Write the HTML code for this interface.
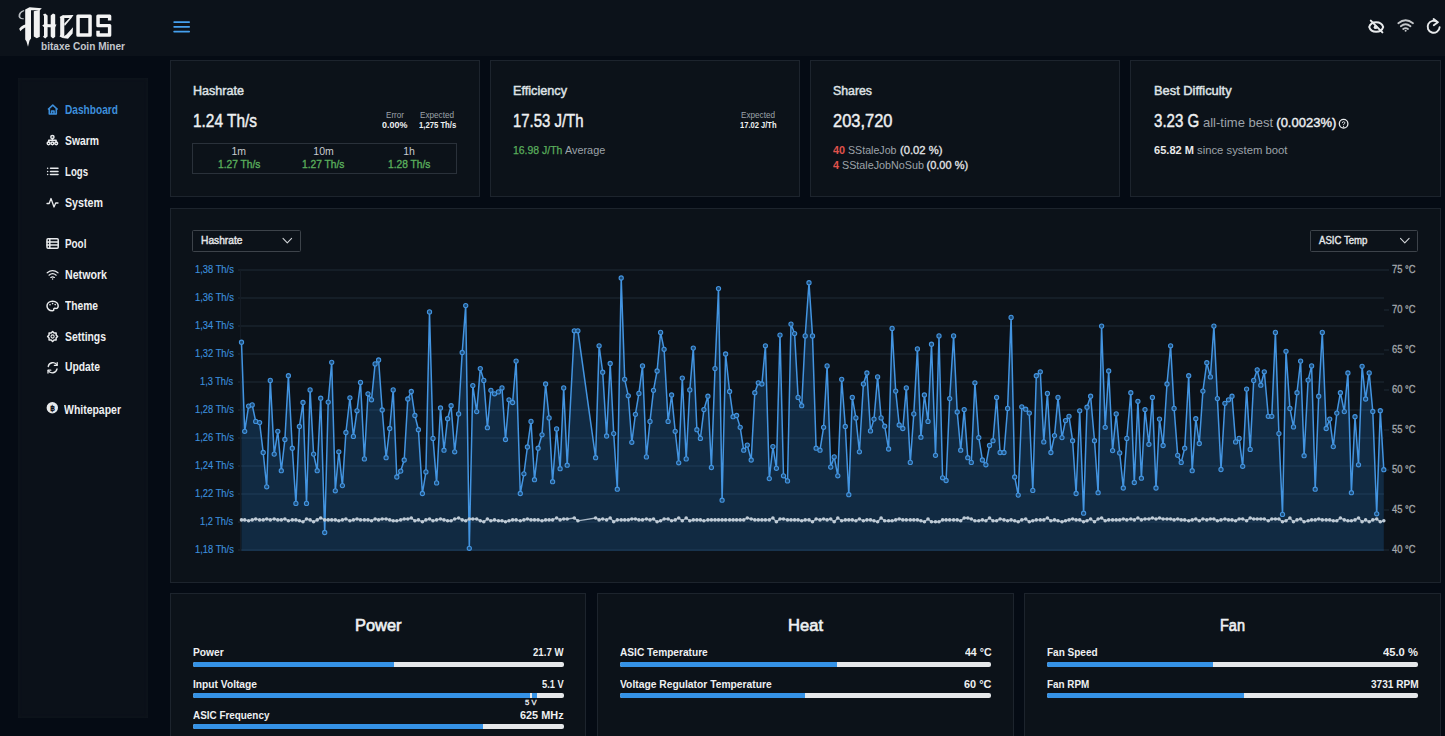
<!DOCTYPE html>
<html><head><meta charset="utf-8"><style>
*{box-sizing:border-box;margin:0;padding:0}
html,body{width:1445px;height:736px;overflow:hidden;background:#050b14;font-family:"Liberation Sans", sans-serif}
.t{position:absolute;white-space:nowrap;line-height:1;transform-origin:0 0}
.a{position:absolute}
.card{position:absolute;background:#0c1219;border:1px solid #1d242d}
.bar{position:absolute;height:5px;background:#e6e8ea;border-radius:2px;overflow:hidden}
.bar div{height:100%;background:#3592e6}
</style></head><body>
<div class="a" style="left:0;top:0;width:1445px;height:56px;background:#0c121a"></div>
<div class="a" style="left:18px;top:78px;width:130px;height:640px;background:#0b1119;box-shadow:0 0 3px 1px #0f151d inset"></div>
<div class="card" style="left:170px;top:60px;width:310px;height:137px"></div>
<div class="card" style="left:490px;top:60px;width:310px;height:137px"></div>
<div class="card" style="left:810px;top:60px;width:310px;height:137px"></div>
<div class="card" style="left:1130px;top:60px;width:311px;height:137px"></div>
<div class="card" style="left:170px;top:208px;width:1271px;height:375px"></div>
<div class="card" style="left:170px;top:593px;width:416px;height:160px"></div>
<div class="card" style="left:597px;top:593px;width:417px;height:160px"></div>
<div class="card" style="left:1024px;top:593px;width:417px;height:160px"></div>
<div class="a" style="left:192px;top:143px;width:265px;height:31px;border:1px solid #2a313a"></div>
<div class="a" style="left:192px;top:230px;width:109px;height:22px;border:1px solid #3d434a;border-radius:1.5px"></div>
<div class="a" style="left:1310px;top:230px;width:108px;height:22px;border:1px solid #3d434a;border-radius:1.5px"></div>
<svg class="a" style="left:0;top:0" width="1445" height="736">
<line x1='238' y1='270' x2='1384' y2='270' stroke='#1f2a36' stroke-width='1'/>
<line x1='238' y1='298' x2='1384' y2='298' stroke='#1f2a36' stroke-width='1'/>
<line x1='238' y1='326' x2='1384' y2='326' stroke='#1f2a36' stroke-width='1'/>
<line x1='238' y1='354' x2='1384' y2='354' stroke='#1f2a36' stroke-width='1'/>
<line x1='238' y1='382' x2='1384' y2='382' stroke='#1f2a36' stroke-width='1'/>
<line x1='238' y1='410' x2='1384' y2='410' stroke='#1f2a36' stroke-width='1'/>
<line x1='238' y1='438' x2='1384' y2='438' stroke='#1f2a36' stroke-width='1'/>
<line x1='238' y1='466' x2='1384' y2='466' stroke='#1f2a36' stroke-width='1'/>
<line x1='238' y1='494' x2='1384' y2='494' stroke='#1f2a36' stroke-width='1'/>
<line x1='238' y1='522' x2='1384' y2='522' stroke='#1f2a36' stroke-width='1'/>
<line x1='238' y1='550' x2='1384' y2='550' stroke='#1f2a36' stroke-width='1'/>
<line x1='1384' y1='270' x2='1389' y2='270' stroke='#1f2a36' stroke-width='1'/>
<line x1='1384' y1='310' x2='1389' y2='310' stroke='#1f2a36' stroke-width='1'/>
<line x1='1384' y1='350' x2='1389' y2='350' stroke='#1f2a36' stroke-width='1'/>
<line x1='1384' y1='390' x2='1389' y2='390' stroke='#1f2a36' stroke-width='1'/>
<line x1='1384' y1='430' x2='1389' y2='430' stroke='#1f2a36' stroke-width='1'/>
<line x1='1384' y1='470' x2='1389' y2='470' stroke='#1f2a36' stroke-width='1'/>
<line x1='1384' y1='510' x2='1389' y2='510' stroke='#1f2a36' stroke-width='1'/>
<line x1='1384' y1='550' x2='1389' y2='550' stroke='#1f2a36' stroke-width='1'/>
<line x1='240.5' y1='270' x2='240.5' y2='551' stroke='#141b24' stroke-width='1'/>
<polygon points='241.5,551 241.5,342.2 244.7,431.3 248.6,406.1 252.2,404.9 255.7,421.4 259.6,422.6 263.2,452.5 266.7,486.8 270.3,380.4 274.2,454.1 277.8,431.3 281.3,470.7 284.9,439.5 288.4,375.7 292.3,448.2 295.9,503.4 299.4,426.5 303.0,402.5 306.5,503.4 310.1,389.9 313.6,454.1 317.2,470.7 320.7,398.2 324.7,532.5 328.2,402.1 331.7,362.3 335.3,490.8 338.8,451.8 342.4,485.6 345.9,432.5 349.9,397.8 353.4,436.4 357.0,410.8 360.5,382.4 364.4,458.9 368.0,393.8 371.5,399.8 375.1,363.9 378.6,360.0 382.2,410.0 386.1,457.7 389.7,428.5 393.2,389.9 396.8,477.0 400.7,471.1 404.2,460.0 407.8,399.0 411.3,391.5 414.9,415.5 418.4,429.7 422.4,493.5 425.9,471.9 429.5,311.9 433.0,438.4 436.6,482.9 440.5,408.0 444.0,450.2 447.6,418.7 451.1,405.7 454.7,451.8 458.6,413.9 462.2,352.5 465.7,305.6 469.3,548.3 472.8,385.6 476.7,411.6 480.3,368.6 483.8,380.4 487.4,427.7 490.9,390.3 494.5,393.8 498.4,391.9 502.0,387.9 505.5,439.5 509.0,399.8 512.6,402.5 516.1,361.1 520.3,493.5 523.9,473.8 527.4,447.0 531.0,421.4 534.5,479.7 538.1,448.2 542.0,434.8 545.6,384.0 549.1,417.9 552.6,481.7 556.6,428.9 560.1,468.7 563.7,387.9 567.2,465.2 574.3,330.8 577.9,330.8 595.6,457.7 599.1,345.8 602.7,372.2 606.6,436.0 610.2,363.5 613.7,433.6 617.3,489.2 621.2,278.0 624.7,379.3 628.3,395.8 631.8,442.3 635.4,414.3 638.9,393.4 642.5,365.9 646.4,456.9 650.0,421.4 653.5,390.3 657.1,371.0 660.6,332.4 664.1,349.3 668.1,421.4 671.6,395.0 675.2,431.3 678.7,462.8 682.3,378.1 686.2,458.9 689.8,389.9 693.3,348.1 696.9,429.7 700.4,438.4 703.9,409.6 707.9,396.2 711.4,467.5 715.0,368.6 718.5,288.6 722.1,500.2 725.6,354.0 729.6,391.5 733.1,416.7 736.6,415.5 740.2,427.3 743.7,450.2 747.3,445.1 751.2,460.0 754.8,392.7 758.3,382.8 761.9,384.0 765.4,345.8 769.3,478.6 772.9,446.6 776.4,468.3 780.0,335.1 783.5,475.8 787.5,480.9 791.0,324.1 794.6,333.6 798.1,397.4 801.7,405.7 805.2,335.9 809.0,282.7 812.5,335.9 816.1,448.2 820.0,450.2 823.6,427.3 827.1,365.9 830.7,467.1 834.2,456.9 837.8,475.8 841.7,379.3 845.3,426.5 848.8,494.7 852.3,397.4 855.9,417.9 859.4,451.8 863.4,384.0 866.9,373.0 870.5,430.9 874.0,419.1 877.6,376.9 881.1,417.9 884.7,426.2 888.6,449.0 892.1,328.4 895.7,391.1 899.2,425.0 902.8,428.5 906.3,387.9 910.3,462.4 913.8,413.9 917.4,348.9 920.9,437.2 924.4,395.0 928.0,421.4 931.5,344.2 935.5,455.3 939.0,335.9 942.6,477.8 946.1,480.5 949.7,398.6 953.6,335.9 957.2,412.0 960.7,450.2 964.2,409.6 967.8,457.7 971.3,462.4 974.9,382.8 978.8,437.6 982.4,460.0 985.9,464.8 989.5,445.5 993.0,440.7 996.6,397.4 1000.1,452.5 1004.0,452.5 1007.6,408.4 1011.1,317.4 1014.7,477.0 1018.2,495.1 1021.8,406.8 1025.7,409.2 1029.3,413.1 1032.8,490.4 1036.3,375.7 1040.3,371.8 1043.8,441.9 1047.4,393.4 1050.9,452.5 1054.5,435.6 1058.0,397.4 1062.0,437.6 1065.5,420.6 1069.0,416.3 1072.6,440.7 1076.1,493.5 1079.7,410.8 1083.6,513.2 1087.0,407.2 1090.6,396.2 1094.5,440.7 1098.1,492.7 1101.6,326.1 1105.2,427.3 1108.7,371.0 1112.6,450.6 1116.2,413.9 1119.7,452.9 1123.3,488.0 1126.8,438.4 1130.8,392.7 1134.3,482.5 1137.9,401.3 1141.4,478.2 1145.0,409.6 1148.9,444.3 1152.4,397.4 1156.0,488.0 1159.5,419.1 1163.1,445.5 1167.0,384.0 1170.6,345.8 1174.1,408.4 1177.7,455.3 1181.2,462.4 1184.7,448.2 1188.7,375.7 1192.2,470.7 1195.8,418.7 1199.3,443.5 1202.9,391.1 1206.8,362.7 1210.4,376.9 1213.9,326.1 1217.4,398.6 1221.0,469.5 1224.9,403.3 1228.5,399.8 1232.0,396.2 1235.6,441.9 1239.1,438.4 1242.7,466.3 1246.6,389.1 1250.2,449.4 1253.7,380.4 1257.2,369.8 1260.8,385.2 1264.3,371.8 1268.3,416.3 1271.8,416.3 1275.4,332.4 1278.9,433.6 1282.5,514.4 1286.0,351.3 1289.9,408.4 1293.5,426.9 1297.0,392.7 1300.6,361.1 1304.1,455.7 1308.1,380.1 1311.6,365.9 1315.2,489.2 1318.7,396.2 1322.3,332.4 1326.2,428.5 1329.7,419.1 1333.3,446.6 1336.8,413.1 1340.4,392.7 1344.3,411.6 1347.9,373.0 1351.4,492.7 1355.0,416.7 1358.5,464.8 1362.1,366.3 1365.6,399.0 1369.2,372.9 1372.8,411.5 1376.7,513.8 1380.3,410.7 1383.8,469.7 1383.8,551' fill='#2882dc' fill-opacity='0.21'/>
<polyline points='241.5,342.2 244.7,431.3 248.6,406.1 252.2,404.9 255.7,421.4 259.6,422.6 263.2,452.5 266.7,486.8 270.3,380.4 274.2,454.1 277.8,431.3 281.3,470.7 284.9,439.5 288.4,375.7 292.3,448.2 295.9,503.4 299.4,426.5 303.0,402.5 306.5,503.4 310.1,389.9 313.6,454.1 317.2,470.7 320.7,398.2 324.7,532.5 328.2,402.1 331.7,362.3 335.3,490.8 338.8,451.8 342.4,485.6 345.9,432.5 349.9,397.8 353.4,436.4 357.0,410.8 360.5,382.4 364.4,458.9 368.0,393.8 371.5,399.8 375.1,363.9 378.6,360.0 382.2,410.0 386.1,457.7 389.7,428.5 393.2,389.9 396.8,477.0 400.7,471.1 404.2,460.0 407.8,399.0 411.3,391.5 414.9,415.5 418.4,429.7 422.4,493.5 425.9,471.9 429.5,311.9 433.0,438.4 436.6,482.9 440.5,408.0 444.0,450.2 447.6,418.7 451.1,405.7 454.7,451.8 458.6,413.9 462.2,352.5 465.7,305.6 469.3,548.3 472.8,385.6 476.7,411.6 480.3,368.6 483.8,380.4 487.4,427.7 490.9,390.3 494.5,393.8 498.4,391.9 502.0,387.9 505.5,439.5 509.0,399.8 512.6,402.5 516.1,361.1 520.3,493.5 523.9,473.8 527.4,447.0 531.0,421.4 534.5,479.7 538.1,448.2 542.0,434.8 545.6,384.0 549.1,417.9 552.6,481.7 556.6,428.9 560.1,468.7 563.7,387.9 567.2,465.2 574.3,330.8 577.9,330.8 595.6,457.7 599.1,345.8 602.7,372.2 606.6,436.0 610.2,363.5 613.7,433.6 617.3,489.2 621.2,278.0 624.7,379.3 628.3,395.8 631.8,442.3 635.4,414.3 638.9,393.4 642.5,365.9 646.4,456.9 650.0,421.4 653.5,390.3 657.1,371.0 660.6,332.4 664.1,349.3 668.1,421.4 671.6,395.0 675.2,431.3 678.7,462.8 682.3,378.1 686.2,458.9 689.8,389.9 693.3,348.1 696.9,429.7 700.4,438.4 703.9,409.6 707.9,396.2 711.4,467.5 715.0,368.6 718.5,288.6 722.1,500.2 725.6,354.0 729.6,391.5 733.1,416.7 736.6,415.5 740.2,427.3 743.7,450.2 747.3,445.1 751.2,460.0 754.8,392.7 758.3,382.8 761.9,384.0 765.4,345.8 769.3,478.6 772.9,446.6 776.4,468.3 780.0,335.1 783.5,475.8 787.5,480.9 791.0,324.1 794.6,333.6 798.1,397.4 801.7,405.7 805.2,335.9 809.0,282.7 812.5,335.9 816.1,448.2 820.0,450.2 823.6,427.3 827.1,365.9 830.7,467.1 834.2,456.9 837.8,475.8 841.7,379.3 845.3,426.5 848.8,494.7 852.3,397.4 855.9,417.9 859.4,451.8 863.4,384.0 866.9,373.0 870.5,430.9 874.0,419.1 877.6,376.9 881.1,417.9 884.7,426.2 888.6,449.0 892.1,328.4 895.7,391.1 899.2,425.0 902.8,428.5 906.3,387.9 910.3,462.4 913.8,413.9 917.4,348.9 920.9,437.2 924.4,395.0 928.0,421.4 931.5,344.2 935.5,455.3 939.0,335.9 942.6,477.8 946.1,480.5 949.7,398.6 953.6,335.9 957.2,412.0 960.7,450.2 964.2,409.6 967.8,457.7 971.3,462.4 974.9,382.8 978.8,437.6 982.4,460.0 985.9,464.8 989.5,445.5 993.0,440.7 996.6,397.4 1000.1,452.5 1004.0,452.5 1007.6,408.4 1011.1,317.4 1014.7,477.0 1018.2,495.1 1021.8,406.8 1025.7,409.2 1029.3,413.1 1032.8,490.4 1036.3,375.7 1040.3,371.8 1043.8,441.9 1047.4,393.4 1050.9,452.5 1054.5,435.6 1058.0,397.4 1062.0,437.6 1065.5,420.6 1069.0,416.3 1072.6,440.7 1076.1,493.5 1079.7,410.8 1083.6,513.2 1087.0,407.2 1090.6,396.2 1094.5,440.7 1098.1,492.7 1101.6,326.1 1105.2,427.3 1108.7,371.0 1112.6,450.6 1116.2,413.9 1119.7,452.9 1123.3,488.0 1126.8,438.4 1130.8,392.7 1134.3,482.5 1137.9,401.3 1141.4,478.2 1145.0,409.6 1148.9,444.3 1152.4,397.4 1156.0,488.0 1159.5,419.1 1163.1,445.5 1167.0,384.0 1170.6,345.8 1174.1,408.4 1177.7,455.3 1181.2,462.4 1184.7,448.2 1188.7,375.7 1192.2,470.7 1195.8,418.7 1199.3,443.5 1202.9,391.1 1206.8,362.7 1210.4,376.9 1213.9,326.1 1217.4,398.6 1221.0,469.5 1224.9,403.3 1228.5,399.8 1232.0,396.2 1235.6,441.9 1239.1,438.4 1242.7,466.3 1246.6,389.1 1250.2,449.4 1253.7,380.4 1257.2,369.8 1260.8,385.2 1264.3,371.8 1268.3,416.3 1271.8,416.3 1275.4,332.4 1278.9,433.6 1282.5,514.4 1286.0,351.3 1289.9,408.4 1293.5,426.9 1297.0,392.7 1300.6,361.1 1304.1,455.7 1308.1,380.1 1311.6,365.9 1315.2,489.2 1318.7,396.2 1322.3,332.4 1326.2,428.5 1329.7,419.1 1333.3,446.6 1336.8,413.1 1340.4,392.7 1344.3,411.6 1347.9,373.0 1351.4,492.7 1355.0,416.7 1358.5,464.8 1362.1,366.3 1365.6,399.0 1369.2,372.9 1372.8,411.5 1376.7,513.8 1380.3,410.7 1383.8,469.7' fill='none' stroke='#4394e0' stroke-width='1.5'/>
<circle cx='241.5' cy='342.2' r='2.1' fill='#1d4a73' stroke='#4394e0' stroke-width='1.1'/>
<circle cx='244.7' cy='431.3' r='2.1' fill='#1d4a73' stroke='#4394e0' stroke-width='1.1'/>
<circle cx='248.6' cy='406.1' r='2.1' fill='#1d4a73' stroke='#4394e0' stroke-width='1.1'/>
<circle cx='252.2' cy='404.9' r='2.1' fill='#1d4a73' stroke='#4394e0' stroke-width='1.1'/>
<circle cx='255.7' cy='421.4' r='2.1' fill='#1d4a73' stroke='#4394e0' stroke-width='1.1'/>
<circle cx='259.6' cy='422.6' r='2.1' fill='#1d4a73' stroke='#4394e0' stroke-width='1.1'/>
<circle cx='263.2' cy='452.5' r='2.1' fill='#1d4a73' stroke='#4394e0' stroke-width='1.1'/>
<circle cx='266.7' cy='486.8' r='2.1' fill='#1d4a73' stroke='#4394e0' stroke-width='1.1'/>
<circle cx='270.3' cy='380.4' r='2.1' fill='#1d4a73' stroke='#4394e0' stroke-width='1.1'/>
<circle cx='274.2' cy='454.1' r='2.1' fill='#1d4a73' stroke='#4394e0' stroke-width='1.1'/>
<circle cx='277.8' cy='431.3' r='2.1' fill='#1d4a73' stroke='#4394e0' stroke-width='1.1'/>
<circle cx='281.3' cy='470.7' r='2.1' fill='#1d4a73' stroke='#4394e0' stroke-width='1.1'/>
<circle cx='284.9' cy='439.5' r='2.1' fill='#1d4a73' stroke='#4394e0' stroke-width='1.1'/>
<circle cx='288.4' cy='375.7' r='2.1' fill='#1d4a73' stroke='#4394e0' stroke-width='1.1'/>
<circle cx='292.3' cy='448.2' r='2.1' fill='#1d4a73' stroke='#4394e0' stroke-width='1.1'/>
<circle cx='295.9' cy='503.4' r='2.1' fill='#1d4a73' stroke='#4394e0' stroke-width='1.1'/>
<circle cx='299.4' cy='426.5' r='2.1' fill='#1d4a73' stroke='#4394e0' stroke-width='1.1'/>
<circle cx='303.0' cy='402.5' r='2.1' fill='#1d4a73' stroke='#4394e0' stroke-width='1.1'/>
<circle cx='306.5' cy='503.4' r='2.1' fill='#1d4a73' stroke='#4394e0' stroke-width='1.1'/>
<circle cx='310.1' cy='389.9' r='2.1' fill='#1d4a73' stroke='#4394e0' stroke-width='1.1'/>
<circle cx='313.6' cy='454.1' r='2.1' fill='#1d4a73' stroke='#4394e0' stroke-width='1.1'/>
<circle cx='317.2' cy='470.7' r='2.1' fill='#1d4a73' stroke='#4394e0' stroke-width='1.1'/>
<circle cx='320.7' cy='398.2' r='2.1' fill='#1d4a73' stroke='#4394e0' stroke-width='1.1'/>
<circle cx='324.7' cy='532.5' r='2.1' fill='#1d4a73' stroke='#4394e0' stroke-width='1.1'/>
<circle cx='328.2' cy='402.1' r='2.1' fill='#1d4a73' stroke='#4394e0' stroke-width='1.1'/>
<circle cx='331.7' cy='362.3' r='2.1' fill='#1d4a73' stroke='#4394e0' stroke-width='1.1'/>
<circle cx='335.3' cy='490.8' r='2.1' fill='#1d4a73' stroke='#4394e0' stroke-width='1.1'/>
<circle cx='338.8' cy='451.8' r='2.1' fill='#1d4a73' stroke='#4394e0' stroke-width='1.1'/>
<circle cx='342.4' cy='485.6' r='2.1' fill='#1d4a73' stroke='#4394e0' stroke-width='1.1'/>
<circle cx='345.9' cy='432.5' r='2.1' fill='#1d4a73' stroke='#4394e0' stroke-width='1.1'/>
<circle cx='349.9' cy='397.8' r='2.1' fill='#1d4a73' stroke='#4394e0' stroke-width='1.1'/>
<circle cx='353.4' cy='436.4' r='2.1' fill='#1d4a73' stroke='#4394e0' stroke-width='1.1'/>
<circle cx='357.0' cy='410.8' r='2.1' fill='#1d4a73' stroke='#4394e0' stroke-width='1.1'/>
<circle cx='360.5' cy='382.4' r='2.1' fill='#1d4a73' stroke='#4394e0' stroke-width='1.1'/>
<circle cx='364.4' cy='458.9' r='2.1' fill='#1d4a73' stroke='#4394e0' stroke-width='1.1'/>
<circle cx='368.0' cy='393.8' r='2.1' fill='#1d4a73' stroke='#4394e0' stroke-width='1.1'/>
<circle cx='371.5' cy='399.8' r='2.1' fill='#1d4a73' stroke='#4394e0' stroke-width='1.1'/>
<circle cx='375.1' cy='363.9' r='2.1' fill='#1d4a73' stroke='#4394e0' stroke-width='1.1'/>
<circle cx='378.6' cy='360.0' r='2.1' fill='#1d4a73' stroke='#4394e0' stroke-width='1.1'/>
<circle cx='382.2' cy='410.0' r='2.1' fill='#1d4a73' stroke='#4394e0' stroke-width='1.1'/>
<circle cx='386.1' cy='457.7' r='2.1' fill='#1d4a73' stroke='#4394e0' stroke-width='1.1'/>
<circle cx='389.7' cy='428.5' r='2.1' fill='#1d4a73' stroke='#4394e0' stroke-width='1.1'/>
<circle cx='393.2' cy='389.9' r='2.1' fill='#1d4a73' stroke='#4394e0' stroke-width='1.1'/>
<circle cx='396.8' cy='477.0' r='2.1' fill='#1d4a73' stroke='#4394e0' stroke-width='1.1'/>
<circle cx='400.7' cy='471.1' r='2.1' fill='#1d4a73' stroke='#4394e0' stroke-width='1.1'/>
<circle cx='404.2' cy='460.0' r='2.1' fill='#1d4a73' stroke='#4394e0' stroke-width='1.1'/>
<circle cx='407.8' cy='399.0' r='2.1' fill='#1d4a73' stroke='#4394e0' stroke-width='1.1'/>
<circle cx='411.3' cy='391.5' r='2.1' fill='#1d4a73' stroke='#4394e0' stroke-width='1.1'/>
<circle cx='414.9' cy='415.5' r='2.1' fill='#1d4a73' stroke='#4394e0' stroke-width='1.1'/>
<circle cx='418.4' cy='429.7' r='2.1' fill='#1d4a73' stroke='#4394e0' stroke-width='1.1'/>
<circle cx='422.4' cy='493.5' r='2.1' fill='#1d4a73' stroke='#4394e0' stroke-width='1.1'/>
<circle cx='425.9' cy='471.9' r='2.1' fill='#1d4a73' stroke='#4394e0' stroke-width='1.1'/>
<circle cx='429.5' cy='311.9' r='2.1' fill='#1d4a73' stroke='#4394e0' stroke-width='1.1'/>
<circle cx='433.0' cy='438.4' r='2.1' fill='#1d4a73' stroke='#4394e0' stroke-width='1.1'/>
<circle cx='436.6' cy='482.9' r='2.1' fill='#1d4a73' stroke='#4394e0' stroke-width='1.1'/>
<circle cx='440.5' cy='408.0' r='2.1' fill='#1d4a73' stroke='#4394e0' stroke-width='1.1'/>
<circle cx='444.0' cy='450.2' r='2.1' fill='#1d4a73' stroke='#4394e0' stroke-width='1.1'/>
<circle cx='447.6' cy='418.7' r='2.1' fill='#1d4a73' stroke='#4394e0' stroke-width='1.1'/>
<circle cx='451.1' cy='405.7' r='2.1' fill='#1d4a73' stroke='#4394e0' stroke-width='1.1'/>
<circle cx='454.7' cy='451.8' r='2.1' fill='#1d4a73' stroke='#4394e0' stroke-width='1.1'/>
<circle cx='458.6' cy='413.9' r='2.1' fill='#1d4a73' stroke='#4394e0' stroke-width='1.1'/>
<circle cx='462.2' cy='352.5' r='2.1' fill='#1d4a73' stroke='#4394e0' stroke-width='1.1'/>
<circle cx='465.7' cy='305.6' r='2.1' fill='#1d4a73' stroke='#4394e0' stroke-width='1.1'/>
<circle cx='469.3' cy='548.3' r='2.1' fill='#1d4a73' stroke='#4394e0' stroke-width='1.1'/>
<circle cx='472.8' cy='385.6' r='2.1' fill='#1d4a73' stroke='#4394e0' stroke-width='1.1'/>
<circle cx='476.7' cy='411.6' r='2.1' fill='#1d4a73' stroke='#4394e0' stroke-width='1.1'/>
<circle cx='480.3' cy='368.6' r='2.1' fill='#1d4a73' stroke='#4394e0' stroke-width='1.1'/>
<circle cx='483.8' cy='380.4' r='2.1' fill='#1d4a73' stroke='#4394e0' stroke-width='1.1'/>
<circle cx='487.4' cy='427.7' r='2.1' fill='#1d4a73' stroke='#4394e0' stroke-width='1.1'/>
<circle cx='490.9' cy='390.3' r='2.1' fill='#1d4a73' stroke='#4394e0' stroke-width='1.1'/>
<circle cx='494.5' cy='393.8' r='2.1' fill='#1d4a73' stroke='#4394e0' stroke-width='1.1'/>
<circle cx='498.4' cy='391.9' r='2.1' fill='#1d4a73' stroke='#4394e0' stroke-width='1.1'/>
<circle cx='502.0' cy='387.9' r='2.1' fill='#1d4a73' stroke='#4394e0' stroke-width='1.1'/>
<circle cx='505.5' cy='439.5' r='2.1' fill='#1d4a73' stroke='#4394e0' stroke-width='1.1'/>
<circle cx='509.0' cy='399.8' r='2.1' fill='#1d4a73' stroke='#4394e0' stroke-width='1.1'/>
<circle cx='512.6' cy='402.5' r='2.1' fill='#1d4a73' stroke='#4394e0' stroke-width='1.1'/>
<circle cx='516.1' cy='361.1' r='2.1' fill='#1d4a73' stroke='#4394e0' stroke-width='1.1'/>
<circle cx='520.3' cy='493.5' r='2.1' fill='#1d4a73' stroke='#4394e0' stroke-width='1.1'/>
<circle cx='523.9' cy='473.8' r='2.1' fill='#1d4a73' stroke='#4394e0' stroke-width='1.1'/>
<circle cx='527.4' cy='447.0' r='2.1' fill='#1d4a73' stroke='#4394e0' stroke-width='1.1'/>
<circle cx='531.0' cy='421.4' r='2.1' fill='#1d4a73' stroke='#4394e0' stroke-width='1.1'/>
<circle cx='534.5' cy='479.7' r='2.1' fill='#1d4a73' stroke='#4394e0' stroke-width='1.1'/>
<circle cx='538.1' cy='448.2' r='2.1' fill='#1d4a73' stroke='#4394e0' stroke-width='1.1'/>
<circle cx='542.0' cy='434.8' r='2.1' fill='#1d4a73' stroke='#4394e0' stroke-width='1.1'/>
<circle cx='545.6' cy='384.0' r='2.1' fill='#1d4a73' stroke='#4394e0' stroke-width='1.1'/>
<circle cx='549.1' cy='417.9' r='2.1' fill='#1d4a73' stroke='#4394e0' stroke-width='1.1'/>
<circle cx='552.6' cy='481.7' r='2.1' fill='#1d4a73' stroke='#4394e0' stroke-width='1.1'/>
<circle cx='556.6' cy='428.9' r='2.1' fill='#1d4a73' stroke='#4394e0' stroke-width='1.1'/>
<circle cx='560.1' cy='468.7' r='2.1' fill='#1d4a73' stroke='#4394e0' stroke-width='1.1'/>
<circle cx='563.7' cy='387.9' r='2.1' fill='#1d4a73' stroke='#4394e0' stroke-width='1.1'/>
<circle cx='567.2' cy='465.2' r='2.1' fill='#1d4a73' stroke='#4394e0' stroke-width='1.1'/>
<circle cx='574.3' cy='330.8' r='2.1' fill='#1d4a73' stroke='#4394e0' stroke-width='1.1'/>
<circle cx='577.9' cy='330.8' r='2.1' fill='#1d4a73' stroke='#4394e0' stroke-width='1.1'/>
<circle cx='595.6' cy='457.7' r='2.1' fill='#1d4a73' stroke='#4394e0' stroke-width='1.1'/>
<circle cx='599.1' cy='345.8' r='2.1' fill='#1d4a73' stroke='#4394e0' stroke-width='1.1'/>
<circle cx='602.7' cy='372.2' r='2.1' fill='#1d4a73' stroke='#4394e0' stroke-width='1.1'/>
<circle cx='606.6' cy='436.0' r='2.1' fill='#1d4a73' stroke='#4394e0' stroke-width='1.1'/>
<circle cx='610.2' cy='363.5' r='2.1' fill='#1d4a73' stroke='#4394e0' stroke-width='1.1'/>
<circle cx='613.7' cy='433.6' r='2.1' fill='#1d4a73' stroke='#4394e0' stroke-width='1.1'/>
<circle cx='617.3' cy='489.2' r='2.1' fill='#1d4a73' stroke='#4394e0' stroke-width='1.1'/>
<circle cx='621.2' cy='278.0' r='2.1' fill='#1d4a73' stroke='#4394e0' stroke-width='1.1'/>
<circle cx='624.7' cy='379.3' r='2.1' fill='#1d4a73' stroke='#4394e0' stroke-width='1.1'/>
<circle cx='628.3' cy='395.8' r='2.1' fill='#1d4a73' stroke='#4394e0' stroke-width='1.1'/>
<circle cx='631.8' cy='442.3' r='2.1' fill='#1d4a73' stroke='#4394e0' stroke-width='1.1'/>
<circle cx='635.4' cy='414.3' r='2.1' fill='#1d4a73' stroke='#4394e0' stroke-width='1.1'/>
<circle cx='638.9' cy='393.4' r='2.1' fill='#1d4a73' stroke='#4394e0' stroke-width='1.1'/>
<circle cx='642.5' cy='365.9' r='2.1' fill='#1d4a73' stroke='#4394e0' stroke-width='1.1'/>
<circle cx='646.4' cy='456.9' r='2.1' fill='#1d4a73' stroke='#4394e0' stroke-width='1.1'/>
<circle cx='650.0' cy='421.4' r='2.1' fill='#1d4a73' stroke='#4394e0' stroke-width='1.1'/>
<circle cx='653.5' cy='390.3' r='2.1' fill='#1d4a73' stroke='#4394e0' stroke-width='1.1'/>
<circle cx='657.1' cy='371.0' r='2.1' fill='#1d4a73' stroke='#4394e0' stroke-width='1.1'/>
<circle cx='660.6' cy='332.4' r='2.1' fill='#1d4a73' stroke='#4394e0' stroke-width='1.1'/>
<circle cx='664.1' cy='349.3' r='2.1' fill='#1d4a73' stroke='#4394e0' stroke-width='1.1'/>
<circle cx='668.1' cy='421.4' r='2.1' fill='#1d4a73' stroke='#4394e0' stroke-width='1.1'/>
<circle cx='671.6' cy='395.0' r='2.1' fill='#1d4a73' stroke='#4394e0' stroke-width='1.1'/>
<circle cx='675.2' cy='431.3' r='2.1' fill='#1d4a73' stroke='#4394e0' stroke-width='1.1'/>
<circle cx='678.7' cy='462.8' r='2.1' fill='#1d4a73' stroke='#4394e0' stroke-width='1.1'/>
<circle cx='682.3' cy='378.1' r='2.1' fill='#1d4a73' stroke='#4394e0' stroke-width='1.1'/>
<circle cx='686.2' cy='458.9' r='2.1' fill='#1d4a73' stroke='#4394e0' stroke-width='1.1'/>
<circle cx='689.8' cy='389.9' r='2.1' fill='#1d4a73' stroke='#4394e0' stroke-width='1.1'/>
<circle cx='693.3' cy='348.1' r='2.1' fill='#1d4a73' stroke='#4394e0' stroke-width='1.1'/>
<circle cx='696.9' cy='429.7' r='2.1' fill='#1d4a73' stroke='#4394e0' stroke-width='1.1'/>
<circle cx='700.4' cy='438.4' r='2.1' fill='#1d4a73' stroke='#4394e0' stroke-width='1.1'/>
<circle cx='703.9' cy='409.6' r='2.1' fill='#1d4a73' stroke='#4394e0' stroke-width='1.1'/>
<circle cx='707.9' cy='396.2' r='2.1' fill='#1d4a73' stroke='#4394e0' stroke-width='1.1'/>
<circle cx='711.4' cy='467.5' r='2.1' fill='#1d4a73' stroke='#4394e0' stroke-width='1.1'/>
<circle cx='715.0' cy='368.6' r='2.1' fill='#1d4a73' stroke='#4394e0' stroke-width='1.1'/>
<circle cx='718.5' cy='288.6' r='2.1' fill='#1d4a73' stroke='#4394e0' stroke-width='1.1'/>
<circle cx='722.1' cy='500.2' r='2.1' fill='#1d4a73' stroke='#4394e0' stroke-width='1.1'/>
<circle cx='725.6' cy='354.0' r='2.1' fill='#1d4a73' stroke='#4394e0' stroke-width='1.1'/>
<circle cx='729.6' cy='391.5' r='2.1' fill='#1d4a73' stroke='#4394e0' stroke-width='1.1'/>
<circle cx='733.1' cy='416.7' r='2.1' fill='#1d4a73' stroke='#4394e0' stroke-width='1.1'/>
<circle cx='736.6' cy='415.5' r='2.1' fill='#1d4a73' stroke='#4394e0' stroke-width='1.1'/>
<circle cx='740.2' cy='427.3' r='2.1' fill='#1d4a73' stroke='#4394e0' stroke-width='1.1'/>
<circle cx='743.7' cy='450.2' r='2.1' fill='#1d4a73' stroke='#4394e0' stroke-width='1.1'/>
<circle cx='747.3' cy='445.1' r='2.1' fill='#1d4a73' stroke='#4394e0' stroke-width='1.1'/>
<circle cx='751.2' cy='460.0' r='2.1' fill='#1d4a73' stroke='#4394e0' stroke-width='1.1'/>
<circle cx='754.8' cy='392.7' r='2.1' fill='#1d4a73' stroke='#4394e0' stroke-width='1.1'/>
<circle cx='758.3' cy='382.8' r='2.1' fill='#1d4a73' stroke='#4394e0' stroke-width='1.1'/>
<circle cx='761.9' cy='384.0' r='2.1' fill='#1d4a73' stroke='#4394e0' stroke-width='1.1'/>
<circle cx='765.4' cy='345.8' r='2.1' fill='#1d4a73' stroke='#4394e0' stroke-width='1.1'/>
<circle cx='769.3' cy='478.6' r='2.1' fill='#1d4a73' stroke='#4394e0' stroke-width='1.1'/>
<circle cx='772.9' cy='446.6' r='2.1' fill='#1d4a73' stroke='#4394e0' stroke-width='1.1'/>
<circle cx='776.4' cy='468.3' r='2.1' fill='#1d4a73' stroke='#4394e0' stroke-width='1.1'/>
<circle cx='780.0' cy='335.1' r='2.1' fill='#1d4a73' stroke='#4394e0' stroke-width='1.1'/>
<circle cx='783.5' cy='475.8' r='2.1' fill='#1d4a73' stroke='#4394e0' stroke-width='1.1'/>
<circle cx='787.5' cy='480.9' r='2.1' fill='#1d4a73' stroke='#4394e0' stroke-width='1.1'/>
<circle cx='791.0' cy='324.1' r='2.1' fill='#1d4a73' stroke='#4394e0' stroke-width='1.1'/>
<circle cx='794.6' cy='333.6' r='2.1' fill='#1d4a73' stroke='#4394e0' stroke-width='1.1'/>
<circle cx='798.1' cy='397.4' r='2.1' fill='#1d4a73' stroke='#4394e0' stroke-width='1.1'/>
<circle cx='801.7' cy='405.7' r='2.1' fill='#1d4a73' stroke='#4394e0' stroke-width='1.1'/>
<circle cx='805.2' cy='335.9' r='2.1' fill='#1d4a73' stroke='#4394e0' stroke-width='1.1'/>
<circle cx='809.0' cy='282.7' r='2.1' fill='#1d4a73' stroke='#4394e0' stroke-width='1.1'/>
<circle cx='812.5' cy='335.9' r='2.1' fill='#1d4a73' stroke='#4394e0' stroke-width='1.1'/>
<circle cx='816.1' cy='448.2' r='2.1' fill='#1d4a73' stroke='#4394e0' stroke-width='1.1'/>
<circle cx='820.0' cy='450.2' r='2.1' fill='#1d4a73' stroke='#4394e0' stroke-width='1.1'/>
<circle cx='823.6' cy='427.3' r='2.1' fill='#1d4a73' stroke='#4394e0' stroke-width='1.1'/>
<circle cx='827.1' cy='365.9' r='2.1' fill='#1d4a73' stroke='#4394e0' stroke-width='1.1'/>
<circle cx='830.7' cy='467.1' r='2.1' fill='#1d4a73' stroke='#4394e0' stroke-width='1.1'/>
<circle cx='834.2' cy='456.9' r='2.1' fill='#1d4a73' stroke='#4394e0' stroke-width='1.1'/>
<circle cx='837.8' cy='475.8' r='2.1' fill='#1d4a73' stroke='#4394e0' stroke-width='1.1'/>
<circle cx='841.7' cy='379.3' r='2.1' fill='#1d4a73' stroke='#4394e0' stroke-width='1.1'/>
<circle cx='845.3' cy='426.5' r='2.1' fill='#1d4a73' stroke='#4394e0' stroke-width='1.1'/>
<circle cx='848.8' cy='494.7' r='2.1' fill='#1d4a73' stroke='#4394e0' stroke-width='1.1'/>
<circle cx='852.3' cy='397.4' r='2.1' fill='#1d4a73' stroke='#4394e0' stroke-width='1.1'/>
<circle cx='855.9' cy='417.9' r='2.1' fill='#1d4a73' stroke='#4394e0' stroke-width='1.1'/>
<circle cx='859.4' cy='451.8' r='2.1' fill='#1d4a73' stroke='#4394e0' stroke-width='1.1'/>
<circle cx='863.4' cy='384.0' r='2.1' fill='#1d4a73' stroke='#4394e0' stroke-width='1.1'/>
<circle cx='866.9' cy='373.0' r='2.1' fill='#1d4a73' stroke='#4394e0' stroke-width='1.1'/>
<circle cx='870.5' cy='430.9' r='2.1' fill='#1d4a73' stroke='#4394e0' stroke-width='1.1'/>
<circle cx='874.0' cy='419.1' r='2.1' fill='#1d4a73' stroke='#4394e0' stroke-width='1.1'/>
<circle cx='877.6' cy='376.9' r='2.1' fill='#1d4a73' stroke='#4394e0' stroke-width='1.1'/>
<circle cx='881.1' cy='417.9' r='2.1' fill='#1d4a73' stroke='#4394e0' stroke-width='1.1'/>
<circle cx='884.7' cy='426.2' r='2.1' fill='#1d4a73' stroke='#4394e0' stroke-width='1.1'/>
<circle cx='888.6' cy='449.0' r='2.1' fill='#1d4a73' stroke='#4394e0' stroke-width='1.1'/>
<circle cx='892.1' cy='328.4' r='2.1' fill='#1d4a73' stroke='#4394e0' stroke-width='1.1'/>
<circle cx='895.7' cy='391.1' r='2.1' fill='#1d4a73' stroke='#4394e0' stroke-width='1.1'/>
<circle cx='899.2' cy='425.0' r='2.1' fill='#1d4a73' stroke='#4394e0' stroke-width='1.1'/>
<circle cx='902.8' cy='428.5' r='2.1' fill='#1d4a73' stroke='#4394e0' stroke-width='1.1'/>
<circle cx='906.3' cy='387.9' r='2.1' fill='#1d4a73' stroke='#4394e0' stroke-width='1.1'/>
<circle cx='910.3' cy='462.4' r='2.1' fill='#1d4a73' stroke='#4394e0' stroke-width='1.1'/>
<circle cx='913.8' cy='413.9' r='2.1' fill='#1d4a73' stroke='#4394e0' stroke-width='1.1'/>
<circle cx='917.4' cy='348.9' r='2.1' fill='#1d4a73' stroke='#4394e0' stroke-width='1.1'/>
<circle cx='920.9' cy='437.2' r='2.1' fill='#1d4a73' stroke='#4394e0' stroke-width='1.1'/>
<circle cx='924.4' cy='395.0' r='2.1' fill='#1d4a73' stroke='#4394e0' stroke-width='1.1'/>
<circle cx='928.0' cy='421.4' r='2.1' fill='#1d4a73' stroke='#4394e0' stroke-width='1.1'/>
<circle cx='931.5' cy='344.2' r='2.1' fill='#1d4a73' stroke='#4394e0' stroke-width='1.1'/>
<circle cx='935.5' cy='455.3' r='2.1' fill='#1d4a73' stroke='#4394e0' stroke-width='1.1'/>
<circle cx='939.0' cy='335.9' r='2.1' fill='#1d4a73' stroke='#4394e0' stroke-width='1.1'/>
<circle cx='942.6' cy='477.8' r='2.1' fill='#1d4a73' stroke='#4394e0' stroke-width='1.1'/>
<circle cx='946.1' cy='480.5' r='2.1' fill='#1d4a73' stroke='#4394e0' stroke-width='1.1'/>
<circle cx='949.7' cy='398.6' r='2.1' fill='#1d4a73' stroke='#4394e0' stroke-width='1.1'/>
<circle cx='953.6' cy='335.9' r='2.1' fill='#1d4a73' stroke='#4394e0' stroke-width='1.1'/>
<circle cx='957.2' cy='412.0' r='2.1' fill='#1d4a73' stroke='#4394e0' stroke-width='1.1'/>
<circle cx='960.7' cy='450.2' r='2.1' fill='#1d4a73' stroke='#4394e0' stroke-width='1.1'/>
<circle cx='964.2' cy='409.6' r='2.1' fill='#1d4a73' stroke='#4394e0' stroke-width='1.1'/>
<circle cx='967.8' cy='457.7' r='2.1' fill='#1d4a73' stroke='#4394e0' stroke-width='1.1'/>
<circle cx='971.3' cy='462.4' r='2.1' fill='#1d4a73' stroke='#4394e0' stroke-width='1.1'/>
<circle cx='974.9' cy='382.8' r='2.1' fill='#1d4a73' stroke='#4394e0' stroke-width='1.1'/>
<circle cx='978.8' cy='437.6' r='2.1' fill='#1d4a73' stroke='#4394e0' stroke-width='1.1'/>
<circle cx='982.4' cy='460.0' r='2.1' fill='#1d4a73' stroke='#4394e0' stroke-width='1.1'/>
<circle cx='985.9' cy='464.8' r='2.1' fill='#1d4a73' stroke='#4394e0' stroke-width='1.1'/>
<circle cx='989.5' cy='445.5' r='2.1' fill='#1d4a73' stroke='#4394e0' stroke-width='1.1'/>
<circle cx='993.0' cy='440.7' r='2.1' fill='#1d4a73' stroke='#4394e0' stroke-width='1.1'/>
<circle cx='996.6' cy='397.4' r='2.1' fill='#1d4a73' stroke='#4394e0' stroke-width='1.1'/>
<circle cx='1000.1' cy='452.5' r='2.1' fill='#1d4a73' stroke='#4394e0' stroke-width='1.1'/>
<circle cx='1004.0' cy='452.5' r='2.1' fill='#1d4a73' stroke='#4394e0' stroke-width='1.1'/>
<circle cx='1007.6' cy='408.4' r='2.1' fill='#1d4a73' stroke='#4394e0' stroke-width='1.1'/>
<circle cx='1011.1' cy='317.4' r='2.1' fill='#1d4a73' stroke='#4394e0' stroke-width='1.1'/>
<circle cx='1014.7' cy='477.0' r='2.1' fill='#1d4a73' stroke='#4394e0' stroke-width='1.1'/>
<circle cx='1018.2' cy='495.1' r='2.1' fill='#1d4a73' stroke='#4394e0' stroke-width='1.1'/>
<circle cx='1021.8' cy='406.8' r='2.1' fill='#1d4a73' stroke='#4394e0' stroke-width='1.1'/>
<circle cx='1025.7' cy='409.2' r='2.1' fill='#1d4a73' stroke='#4394e0' stroke-width='1.1'/>
<circle cx='1029.3' cy='413.1' r='2.1' fill='#1d4a73' stroke='#4394e0' stroke-width='1.1'/>
<circle cx='1032.8' cy='490.4' r='2.1' fill='#1d4a73' stroke='#4394e0' stroke-width='1.1'/>
<circle cx='1036.3' cy='375.7' r='2.1' fill='#1d4a73' stroke='#4394e0' stroke-width='1.1'/>
<circle cx='1040.3' cy='371.8' r='2.1' fill='#1d4a73' stroke='#4394e0' stroke-width='1.1'/>
<circle cx='1043.8' cy='441.9' r='2.1' fill='#1d4a73' stroke='#4394e0' stroke-width='1.1'/>
<circle cx='1047.4' cy='393.4' r='2.1' fill='#1d4a73' stroke='#4394e0' stroke-width='1.1'/>
<circle cx='1050.9' cy='452.5' r='2.1' fill='#1d4a73' stroke='#4394e0' stroke-width='1.1'/>
<circle cx='1054.5' cy='435.6' r='2.1' fill='#1d4a73' stroke='#4394e0' stroke-width='1.1'/>
<circle cx='1058.0' cy='397.4' r='2.1' fill='#1d4a73' stroke='#4394e0' stroke-width='1.1'/>
<circle cx='1062.0' cy='437.6' r='2.1' fill='#1d4a73' stroke='#4394e0' stroke-width='1.1'/>
<circle cx='1065.5' cy='420.6' r='2.1' fill='#1d4a73' stroke='#4394e0' stroke-width='1.1'/>
<circle cx='1069.0' cy='416.3' r='2.1' fill='#1d4a73' stroke='#4394e0' stroke-width='1.1'/>
<circle cx='1072.6' cy='440.7' r='2.1' fill='#1d4a73' stroke='#4394e0' stroke-width='1.1'/>
<circle cx='1076.1' cy='493.5' r='2.1' fill='#1d4a73' stroke='#4394e0' stroke-width='1.1'/>
<circle cx='1079.7' cy='410.8' r='2.1' fill='#1d4a73' stroke='#4394e0' stroke-width='1.1'/>
<circle cx='1083.6' cy='513.2' r='2.1' fill='#1d4a73' stroke='#4394e0' stroke-width='1.1'/>
<circle cx='1087.0' cy='407.2' r='2.1' fill='#1d4a73' stroke='#4394e0' stroke-width='1.1'/>
<circle cx='1090.6' cy='396.2' r='2.1' fill='#1d4a73' stroke='#4394e0' stroke-width='1.1'/>
<circle cx='1094.5' cy='440.7' r='2.1' fill='#1d4a73' stroke='#4394e0' stroke-width='1.1'/>
<circle cx='1098.1' cy='492.7' r='2.1' fill='#1d4a73' stroke='#4394e0' stroke-width='1.1'/>
<circle cx='1101.6' cy='326.1' r='2.1' fill='#1d4a73' stroke='#4394e0' stroke-width='1.1'/>
<circle cx='1105.2' cy='427.3' r='2.1' fill='#1d4a73' stroke='#4394e0' stroke-width='1.1'/>
<circle cx='1108.7' cy='371.0' r='2.1' fill='#1d4a73' stroke='#4394e0' stroke-width='1.1'/>
<circle cx='1112.6' cy='450.6' r='2.1' fill='#1d4a73' stroke='#4394e0' stroke-width='1.1'/>
<circle cx='1116.2' cy='413.9' r='2.1' fill='#1d4a73' stroke='#4394e0' stroke-width='1.1'/>
<circle cx='1119.7' cy='452.9' r='2.1' fill='#1d4a73' stroke='#4394e0' stroke-width='1.1'/>
<circle cx='1123.3' cy='488.0' r='2.1' fill='#1d4a73' stroke='#4394e0' stroke-width='1.1'/>
<circle cx='1126.8' cy='438.4' r='2.1' fill='#1d4a73' stroke='#4394e0' stroke-width='1.1'/>
<circle cx='1130.8' cy='392.7' r='2.1' fill='#1d4a73' stroke='#4394e0' stroke-width='1.1'/>
<circle cx='1134.3' cy='482.5' r='2.1' fill='#1d4a73' stroke='#4394e0' stroke-width='1.1'/>
<circle cx='1137.9' cy='401.3' r='2.1' fill='#1d4a73' stroke='#4394e0' stroke-width='1.1'/>
<circle cx='1141.4' cy='478.2' r='2.1' fill='#1d4a73' stroke='#4394e0' stroke-width='1.1'/>
<circle cx='1145.0' cy='409.6' r='2.1' fill='#1d4a73' stroke='#4394e0' stroke-width='1.1'/>
<circle cx='1148.9' cy='444.3' r='2.1' fill='#1d4a73' stroke='#4394e0' stroke-width='1.1'/>
<circle cx='1152.4' cy='397.4' r='2.1' fill='#1d4a73' stroke='#4394e0' stroke-width='1.1'/>
<circle cx='1156.0' cy='488.0' r='2.1' fill='#1d4a73' stroke='#4394e0' stroke-width='1.1'/>
<circle cx='1159.5' cy='419.1' r='2.1' fill='#1d4a73' stroke='#4394e0' stroke-width='1.1'/>
<circle cx='1163.1' cy='445.5' r='2.1' fill='#1d4a73' stroke='#4394e0' stroke-width='1.1'/>
<circle cx='1167.0' cy='384.0' r='2.1' fill='#1d4a73' stroke='#4394e0' stroke-width='1.1'/>
<circle cx='1170.6' cy='345.8' r='2.1' fill='#1d4a73' stroke='#4394e0' stroke-width='1.1'/>
<circle cx='1174.1' cy='408.4' r='2.1' fill='#1d4a73' stroke='#4394e0' stroke-width='1.1'/>
<circle cx='1177.7' cy='455.3' r='2.1' fill='#1d4a73' stroke='#4394e0' stroke-width='1.1'/>
<circle cx='1181.2' cy='462.4' r='2.1' fill='#1d4a73' stroke='#4394e0' stroke-width='1.1'/>
<circle cx='1184.7' cy='448.2' r='2.1' fill='#1d4a73' stroke='#4394e0' stroke-width='1.1'/>
<circle cx='1188.7' cy='375.7' r='2.1' fill='#1d4a73' stroke='#4394e0' stroke-width='1.1'/>
<circle cx='1192.2' cy='470.7' r='2.1' fill='#1d4a73' stroke='#4394e0' stroke-width='1.1'/>
<circle cx='1195.8' cy='418.7' r='2.1' fill='#1d4a73' stroke='#4394e0' stroke-width='1.1'/>
<circle cx='1199.3' cy='443.5' r='2.1' fill='#1d4a73' stroke='#4394e0' stroke-width='1.1'/>
<circle cx='1202.9' cy='391.1' r='2.1' fill='#1d4a73' stroke='#4394e0' stroke-width='1.1'/>
<circle cx='1206.8' cy='362.7' r='2.1' fill='#1d4a73' stroke='#4394e0' stroke-width='1.1'/>
<circle cx='1210.4' cy='376.9' r='2.1' fill='#1d4a73' stroke='#4394e0' stroke-width='1.1'/>
<circle cx='1213.9' cy='326.1' r='2.1' fill='#1d4a73' stroke='#4394e0' stroke-width='1.1'/>
<circle cx='1217.4' cy='398.6' r='2.1' fill='#1d4a73' stroke='#4394e0' stroke-width='1.1'/>
<circle cx='1221.0' cy='469.5' r='2.1' fill='#1d4a73' stroke='#4394e0' stroke-width='1.1'/>
<circle cx='1224.9' cy='403.3' r='2.1' fill='#1d4a73' stroke='#4394e0' stroke-width='1.1'/>
<circle cx='1228.5' cy='399.8' r='2.1' fill='#1d4a73' stroke='#4394e0' stroke-width='1.1'/>
<circle cx='1232.0' cy='396.2' r='2.1' fill='#1d4a73' stroke='#4394e0' stroke-width='1.1'/>
<circle cx='1235.6' cy='441.9' r='2.1' fill='#1d4a73' stroke='#4394e0' stroke-width='1.1'/>
<circle cx='1239.1' cy='438.4' r='2.1' fill='#1d4a73' stroke='#4394e0' stroke-width='1.1'/>
<circle cx='1242.7' cy='466.3' r='2.1' fill='#1d4a73' stroke='#4394e0' stroke-width='1.1'/>
<circle cx='1246.6' cy='389.1' r='2.1' fill='#1d4a73' stroke='#4394e0' stroke-width='1.1'/>
<circle cx='1250.2' cy='449.4' r='2.1' fill='#1d4a73' stroke='#4394e0' stroke-width='1.1'/>
<circle cx='1253.7' cy='380.4' r='2.1' fill='#1d4a73' stroke='#4394e0' stroke-width='1.1'/>
<circle cx='1257.2' cy='369.8' r='2.1' fill='#1d4a73' stroke='#4394e0' stroke-width='1.1'/>
<circle cx='1260.8' cy='385.2' r='2.1' fill='#1d4a73' stroke='#4394e0' stroke-width='1.1'/>
<circle cx='1264.3' cy='371.8' r='2.1' fill='#1d4a73' stroke='#4394e0' stroke-width='1.1'/>
<circle cx='1268.3' cy='416.3' r='2.1' fill='#1d4a73' stroke='#4394e0' stroke-width='1.1'/>
<circle cx='1271.8' cy='416.3' r='2.1' fill='#1d4a73' stroke='#4394e0' stroke-width='1.1'/>
<circle cx='1275.4' cy='332.4' r='2.1' fill='#1d4a73' stroke='#4394e0' stroke-width='1.1'/>
<circle cx='1278.9' cy='433.6' r='2.1' fill='#1d4a73' stroke='#4394e0' stroke-width='1.1'/>
<circle cx='1282.5' cy='514.4' r='2.1' fill='#1d4a73' stroke='#4394e0' stroke-width='1.1'/>
<circle cx='1286.0' cy='351.3' r='2.1' fill='#1d4a73' stroke='#4394e0' stroke-width='1.1'/>
<circle cx='1289.9' cy='408.4' r='2.1' fill='#1d4a73' stroke='#4394e0' stroke-width='1.1'/>
<circle cx='1293.5' cy='426.9' r='2.1' fill='#1d4a73' stroke='#4394e0' stroke-width='1.1'/>
<circle cx='1297.0' cy='392.7' r='2.1' fill='#1d4a73' stroke='#4394e0' stroke-width='1.1'/>
<circle cx='1300.6' cy='361.1' r='2.1' fill='#1d4a73' stroke='#4394e0' stroke-width='1.1'/>
<circle cx='1304.1' cy='455.7' r='2.1' fill='#1d4a73' stroke='#4394e0' stroke-width='1.1'/>
<circle cx='1308.1' cy='380.1' r='2.1' fill='#1d4a73' stroke='#4394e0' stroke-width='1.1'/>
<circle cx='1311.6' cy='365.9' r='2.1' fill='#1d4a73' stroke='#4394e0' stroke-width='1.1'/>
<circle cx='1315.2' cy='489.2' r='2.1' fill='#1d4a73' stroke='#4394e0' stroke-width='1.1'/>
<circle cx='1318.7' cy='396.2' r='2.1' fill='#1d4a73' stroke='#4394e0' stroke-width='1.1'/>
<circle cx='1322.3' cy='332.4' r='2.1' fill='#1d4a73' stroke='#4394e0' stroke-width='1.1'/>
<circle cx='1326.2' cy='428.5' r='2.1' fill='#1d4a73' stroke='#4394e0' stroke-width='1.1'/>
<circle cx='1329.7' cy='419.1' r='2.1' fill='#1d4a73' stroke='#4394e0' stroke-width='1.1'/>
<circle cx='1333.3' cy='446.6' r='2.1' fill='#1d4a73' stroke='#4394e0' stroke-width='1.1'/>
<circle cx='1336.8' cy='413.1' r='2.1' fill='#1d4a73' stroke='#4394e0' stroke-width='1.1'/>
<circle cx='1340.4' cy='392.7' r='2.1' fill='#1d4a73' stroke='#4394e0' stroke-width='1.1'/>
<circle cx='1344.3' cy='411.6' r='2.1' fill='#1d4a73' stroke='#4394e0' stroke-width='1.1'/>
<circle cx='1347.9' cy='373.0' r='2.1' fill='#1d4a73' stroke='#4394e0' stroke-width='1.1'/>
<circle cx='1351.4' cy='492.7' r='2.1' fill='#1d4a73' stroke='#4394e0' stroke-width='1.1'/>
<circle cx='1355.0' cy='416.7' r='2.1' fill='#1d4a73' stroke='#4394e0' stroke-width='1.1'/>
<circle cx='1358.5' cy='464.8' r='2.1' fill='#1d4a73' stroke='#4394e0' stroke-width='1.1'/>
<circle cx='1362.1' cy='366.3' r='2.1' fill='#1d4a73' stroke='#4394e0' stroke-width='1.1'/>
<circle cx='1365.6' cy='399.0' r='2.1' fill='#1d4a73' stroke='#4394e0' stroke-width='1.1'/>
<circle cx='1369.2' cy='372.9' r='2.1' fill='#1d4a73' stroke='#4394e0' stroke-width='1.1'/>
<circle cx='1372.8' cy='411.5' r='2.1' fill='#1d4a73' stroke='#4394e0' stroke-width='1.1'/>
<circle cx='1376.7' cy='513.8' r='2.1' fill='#1d4a73' stroke='#4394e0' stroke-width='1.1'/>
<circle cx='1380.3' cy='410.7' r='2.1' fill='#1d4a73' stroke='#4394e0' stroke-width='1.1'/>
<circle cx='1383.8' cy='469.7' r='2.1' fill='#1d4a73' stroke='#4394e0' stroke-width='1.1'/>
<polyline points='241.5,519.9 244.7,519.9 248.6,520.8 252.2,519.9 255.7,519.0 259.6,519.9 263.2,519.9 266.7,519.0 270.3,519.9 274.2,519.0 277.8,519.9 281.3,519.9 284.9,519.0 288.4,520.8 292.3,519.9 295.9,519.9 299.4,520.8 303.0,521.8 306.5,519.0 310.1,519.9 313.6,521.8 317.2,519.9 320.7,518.0 324.7,519.9 328.2,519.9 331.7,519.9 335.3,519.9 338.8,520.8 342.4,519.9 345.9,519.0 349.9,520.8 353.4,519.9 357.0,519.0 360.5,519.9 364.4,519.9 368.0,519.9 371.5,520.8 375.1,519.0 378.6,519.9 382.2,519.0 386.1,519.0 389.7,519.9 393.2,520.8 396.8,520.8 400.7,519.9 404.2,519.0 407.8,519.0 411.3,518.0 414.9,520.8 418.4,519.9 422.4,521.8 425.9,519.9 429.5,519.0 433.0,520.8 436.6,519.9 440.5,519.0 444.0,519.9 447.6,520.8 451.1,520.8 454.7,519.0 458.6,518.0 462.2,519.9 465.7,520.8 469.3,519.0 472.8,519.0 476.7,519.0 480.3,520.8 483.8,521.8 487.4,519.0 490.9,520.8 494.5,519.9 498.4,520.8 502.0,520.8 505.5,521.8 509.0,520.8 512.6,519.9 516.1,519.9 520.3,520.8 523.9,519.9 527.4,519.0 531.0,519.9 534.5,519.9 538.1,519.9 542.0,520.8 545.6,519.9 549.1,519.9 552.6,519.9 556.6,518.0 560.1,519.9 563.7,519.0 567.2,519.0 574.3,518.0 577.9,520.8 595.6,518.0 599.1,519.9 602.7,519.0 606.6,519.9 610.2,518.0 613.7,521.8 617.3,519.9 621.2,519.9 624.7,519.9 628.3,519.9 631.8,519.0 635.4,519.0 638.9,519.9 642.5,519.9 646.4,519.0 650.0,519.9 653.5,519.0 657.1,521.8 660.6,520.8 664.1,519.0 668.1,519.0 671.6,520.8 675.2,519.9 678.7,518.0 682.3,520.8 686.2,518.0 689.8,520.8 693.3,519.9 696.9,519.9 700.4,519.9 703.9,520.8 707.9,519.9 711.4,519.9 715.0,519.9 718.5,519.9 722.1,519.9 725.6,519.9 729.6,519.9 733.1,519.9 736.6,519.9 740.2,519.9 743.7,519.9 747.3,518.0 751.2,519.0 754.8,519.9 758.3,519.9 761.9,519.9 765.4,519.9 769.3,519.9 772.9,518.0 776.4,521.8 780.0,519.0 783.5,519.0 787.5,519.9 791.0,519.9 794.6,519.9 798.1,519.9 801.7,520.8 805.2,519.9 809.0,519.9 812.5,521.8 816.1,519.0 820.0,519.9 823.6,519.0 827.1,519.9 830.7,519.0 834.2,521.8 837.8,518.0 841.7,520.8 845.3,519.9 848.8,519.9 852.3,519.9 855.9,520.8 859.4,519.0 863.4,520.8 866.9,519.9 870.5,519.9 874.0,520.8 877.6,521.8 881.1,518.0 884.7,520.8 888.6,520.8 892.1,520.8 895.7,519.9 899.2,519.0 902.8,519.9 906.3,519.9 910.3,519.9 913.8,519.9 917.4,519.9 920.9,520.8 924.4,521.8 928.0,519.0 931.5,521.8 935.5,521.8 939.0,521.8 942.6,519.9 946.1,519.9 949.7,519.9 953.6,519.9 957.2,519.9 960.7,520.8 964.2,518.0 967.8,518.0 971.3,519.0 974.9,520.8 978.8,520.8 982.4,519.9 985.9,520.8 989.5,518.0 993.0,520.8 996.6,520.8 1000.1,519.0 1004.0,519.9 1007.6,520.8 1011.1,519.9 1014.7,520.8 1018.2,521.8 1021.8,519.9 1025.7,519.0 1029.3,521.8 1032.8,520.8 1036.3,519.9 1040.3,519.9 1043.8,519.9 1047.4,518.0 1050.9,520.8 1054.5,519.9 1058.0,520.8 1062.0,521.8 1065.5,520.8 1069.0,519.9 1072.6,519.0 1076.1,519.9 1079.7,519.9 1083.6,521.8 1087.0,520.8 1090.6,519.0 1094.5,521.8 1098.1,519.0 1101.6,518.0 1105.2,520.8 1108.7,519.9 1112.6,519.9 1116.2,519.9 1119.7,519.9 1123.3,519.0 1126.8,519.9 1130.8,519.0 1134.3,519.9 1137.9,518.0 1141.4,519.9 1145.0,519.0 1148.9,519.0 1152.4,518.0 1156.0,519.0 1159.5,518.0 1163.1,519.0 1167.0,519.0 1170.6,519.0 1174.1,519.9 1177.7,519.0 1181.2,519.9 1184.7,519.9 1188.7,520.8 1192.2,519.9 1195.8,519.0 1199.3,520.8 1202.9,519.0 1206.8,519.9 1210.4,519.0 1213.9,519.0 1217.4,520.8 1221.0,519.9 1224.9,519.0 1228.5,519.9 1232.0,519.9 1235.6,520.8 1239.1,519.0 1242.7,519.0 1246.6,520.8 1250.2,518.0 1253.7,519.0 1257.2,519.0 1260.8,519.0 1264.3,519.0 1268.3,520.8 1271.8,519.0 1275.4,519.0 1278.9,519.0 1282.5,521.8 1286.0,520.8 1289.9,518.0 1293.5,521.8 1297.0,519.9 1300.6,519.0 1304.1,521.8 1308.1,520.8 1311.6,519.9 1315.2,519.9 1318.7,519.0 1322.3,519.9 1326.2,519.9 1329.7,519.9 1333.3,520.8 1336.8,520.8 1340.4,518.0 1344.3,519.9 1347.9,520.8 1351.4,520.8 1355.0,519.9 1358.5,518.0 1362.1,521.8 1365.6,519.9 1369.2,521.8 1372.8,519.9 1376.7,519.0 1380.3,521.8 1383.8,520.8' fill='none' stroke='#a8b6c4' stroke-width='1.3'/>
<circle cx='241.5' cy='519.9' r='1.8' fill='#bfcbd6'/>
<circle cx='244.7' cy='519.9' r='1.8' fill='#bfcbd6'/>
<circle cx='248.6' cy='520.8' r='1.8' fill='#bfcbd6'/>
<circle cx='252.2' cy='519.9' r='1.8' fill='#bfcbd6'/>
<circle cx='255.7' cy='519.0' r='1.8' fill='#bfcbd6'/>
<circle cx='259.6' cy='519.9' r='1.8' fill='#bfcbd6'/>
<circle cx='263.2' cy='519.9' r='1.8' fill='#bfcbd6'/>
<circle cx='266.7' cy='519.0' r='1.8' fill='#bfcbd6'/>
<circle cx='270.3' cy='519.9' r='1.8' fill='#bfcbd6'/>
<circle cx='274.2' cy='519.0' r='1.8' fill='#bfcbd6'/>
<circle cx='277.8' cy='519.9' r='1.8' fill='#bfcbd6'/>
<circle cx='281.3' cy='519.9' r='1.8' fill='#bfcbd6'/>
<circle cx='284.9' cy='519.0' r='1.8' fill='#bfcbd6'/>
<circle cx='288.4' cy='520.8' r='1.8' fill='#bfcbd6'/>
<circle cx='292.3' cy='519.9' r='1.8' fill='#bfcbd6'/>
<circle cx='295.9' cy='519.9' r='1.8' fill='#bfcbd6'/>
<circle cx='299.4' cy='520.8' r='1.8' fill='#bfcbd6'/>
<circle cx='303.0' cy='521.8' r='1.8' fill='#bfcbd6'/>
<circle cx='306.5' cy='519.0' r='1.8' fill='#bfcbd6'/>
<circle cx='310.1' cy='519.9' r='1.8' fill='#bfcbd6'/>
<circle cx='313.6' cy='521.8' r='1.8' fill='#bfcbd6'/>
<circle cx='317.2' cy='519.9' r='1.8' fill='#bfcbd6'/>
<circle cx='320.7' cy='518.0' r='1.8' fill='#bfcbd6'/>
<circle cx='324.7' cy='519.9' r='1.8' fill='#bfcbd6'/>
<circle cx='328.2' cy='519.9' r='1.8' fill='#bfcbd6'/>
<circle cx='331.7' cy='519.9' r='1.8' fill='#bfcbd6'/>
<circle cx='335.3' cy='519.9' r='1.8' fill='#bfcbd6'/>
<circle cx='338.8' cy='520.8' r='1.8' fill='#bfcbd6'/>
<circle cx='342.4' cy='519.9' r='1.8' fill='#bfcbd6'/>
<circle cx='345.9' cy='519.0' r='1.8' fill='#bfcbd6'/>
<circle cx='349.9' cy='520.8' r='1.8' fill='#bfcbd6'/>
<circle cx='353.4' cy='519.9' r='1.8' fill='#bfcbd6'/>
<circle cx='357.0' cy='519.0' r='1.8' fill='#bfcbd6'/>
<circle cx='360.5' cy='519.9' r='1.8' fill='#bfcbd6'/>
<circle cx='364.4' cy='519.9' r='1.8' fill='#bfcbd6'/>
<circle cx='368.0' cy='519.9' r='1.8' fill='#bfcbd6'/>
<circle cx='371.5' cy='520.8' r='1.8' fill='#bfcbd6'/>
<circle cx='375.1' cy='519.0' r='1.8' fill='#bfcbd6'/>
<circle cx='378.6' cy='519.9' r='1.8' fill='#bfcbd6'/>
<circle cx='382.2' cy='519.0' r='1.8' fill='#bfcbd6'/>
<circle cx='386.1' cy='519.0' r='1.8' fill='#bfcbd6'/>
<circle cx='389.7' cy='519.9' r='1.8' fill='#bfcbd6'/>
<circle cx='393.2' cy='520.8' r='1.8' fill='#bfcbd6'/>
<circle cx='396.8' cy='520.8' r='1.8' fill='#bfcbd6'/>
<circle cx='400.7' cy='519.9' r='1.8' fill='#bfcbd6'/>
<circle cx='404.2' cy='519.0' r='1.8' fill='#bfcbd6'/>
<circle cx='407.8' cy='519.0' r='1.8' fill='#bfcbd6'/>
<circle cx='411.3' cy='518.0' r='1.8' fill='#bfcbd6'/>
<circle cx='414.9' cy='520.8' r='1.8' fill='#bfcbd6'/>
<circle cx='418.4' cy='519.9' r='1.8' fill='#bfcbd6'/>
<circle cx='422.4' cy='521.8' r='1.8' fill='#bfcbd6'/>
<circle cx='425.9' cy='519.9' r='1.8' fill='#bfcbd6'/>
<circle cx='429.5' cy='519.0' r='1.8' fill='#bfcbd6'/>
<circle cx='433.0' cy='520.8' r='1.8' fill='#bfcbd6'/>
<circle cx='436.6' cy='519.9' r='1.8' fill='#bfcbd6'/>
<circle cx='440.5' cy='519.0' r='1.8' fill='#bfcbd6'/>
<circle cx='444.0' cy='519.9' r='1.8' fill='#bfcbd6'/>
<circle cx='447.6' cy='520.8' r='1.8' fill='#bfcbd6'/>
<circle cx='451.1' cy='520.8' r='1.8' fill='#bfcbd6'/>
<circle cx='454.7' cy='519.0' r='1.8' fill='#bfcbd6'/>
<circle cx='458.6' cy='518.0' r='1.8' fill='#bfcbd6'/>
<circle cx='462.2' cy='519.9' r='1.8' fill='#bfcbd6'/>
<circle cx='465.7' cy='520.8' r='1.8' fill='#bfcbd6'/>
<circle cx='469.3' cy='519.0' r='1.8' fill='#bfcbd6'/>
<circle cx='472.8' cy='519.0' r='1.8' fill='#bfcbd6'/>
<circle cx='476.7' cy='519.0' r='1.8' fill='#bfcbd6'/>
<circle cx='480.3' cy='520.8' r='1.8' fill='#bfcbd6'/>
<circle cx='483.8' cy='521.8' r='1.8' fill='#bfcbd6'/>
<circle cx='487.4' cy='519.0' r='1.8' fill='#bfcbd6'/>
<circle cx='490.9' cy='520.8' r='1.8' fill='#bfcbd6'/>
<circle cx='494.5' cy='519.9' r='1.8' fill='#bfcbd6'/>
<circle cx='498.4' cy='520.8' r='1.8' fill='#bfcbd6'/>
<circle cx='502.0' cy='520.8' r='1.8' fill='#bfcbd6'/>
<circle cx='505.5' cy='521.8' r='1.8' fill='#bfcbd6'/>
<circle cx='509.0' cy='520.8' r='1.8' fill='#bfcbd6'/>
<circle cx='512.6' cy='519.9' r='1.8' fill='#bfcbd6'/>
<circle cx='516.1' cy='519.9' r='1.8' fill='#bfcbd6'/>
<circle cx='520.3' cy='520.8' r='1.8' fill='#bfcbd6'/>
<circle cx='523.9' cy='519.9' r='1.8' fill='#bfcbd6'/>
<circle cx='527.4' cy='519.0' r='1.8' fill='#bfcbd6'/>
<circle cx='531.0' cy='519.9' r='1.8' fill='#bfcbd6'/>
<circle cx='534.5' cy='519.9' r='1.8' fill='#bfcbd6'/>
<circle cx='538.1' cy='519.9' r='1.8' fill='#bfcbd6'/>
<circle cx='542.0' cy='520.8' r='1.8' fill='#bfcbd6'/>
<circle cx='545.6' cy='519.9' r='1.8' fill='#bfcbd6'/>
<circle cx='549.1' cy='519.9' r='1.8' fill='#bfcbd6'/>
<circle cx='552.6' cy='519.9' r='1.8' fill='#bfcbd6'/>
<circle cx='556.6' cy='518.0' r='1.8' fill='#bfcbd6'/>
<circle cx='560.1' cy='519.9' r='1.8' fill='#bfcbd6'/>
<circle cx='563.7' cy='519.0' r='1.8' fill='#bfcbd6'/>
<circle cx='567.2' cy='519.0' r='1.8' fill='#bfcbd6'/>
<circle cx='574.3' cy='518.0' r='1.8' fill='#bfcbd6'/>
<circle cx='577.9' cy='520.8' r='1.8' fill='#bfcbd6'/>
<circle cx='595.6' cy='518.0' r='1.8' fill='#bfcbd6'/>
<circle cx='599.1' cy='519.9' r='1.8' fill='#bfcbd6'/>
<circle cx='602.7' cy='519.0' r='1.8' fill='#bfcbd6'/>
<circle cx='606.6' cy='519.9' r='1.8' fill='#bfcbd6'/>
<circle cx='610.2' cy='518.0' r='1.8' fill='#bfcbd6'/>
<circle cx='613.7' cy='521.8' r='1.8' fill='#bfcbd6'/>
<circle cx='617.3' cy='519.9' r='1.8' fill='#bfcbd6'/>
<circle cx='621.2' cy='519.9' r='1.8' fill='#bfcbd6'/>
<circle cx='624.7' cy='519.9' r='1.8' fill='#bfcbd6'/>
<circle cx='628.3' cy='519.9' r='1.8' fill='#bfcbd6'/>
<circle cx='631.8' cy='519.0' r='1.8' fill='#bfcbd6'/>
<circle cx='635.4' cy='519.0' r='1.8' fill='#bfcbd6'/>
<circle cx='638.9' cy='519.9' r='1.8' fill='#bfcbd6'/>
<circle cx='642.5' cy='519.9' r='1.8' fill='#bfcbd6'/>
<circle cx='646.4' cy='519.0' r='1.8' fill='#bfcbd6'/>
<circle cx='650.0' cy='519.9' r='1.8' fill='#bfcbd6'/>
<circle cx='653.5' cy='519.0' r='1.8' fill='#bfcbd6'/>
<circle cx='657.1' cy='521.8' r='1.8' fill='#bfcbd6'/>
<circle cx='660.6' cy='520.8' r='1.8' fill='#bfcbd6'/>
<circle cx='664.1' cy='519.0' r='1.8' fill='#bfcbd6'/>
<circle cx='668.1' cy='519.0' r='1.8' fill='#bfcbd6'/>
<circle cx='671.6' cy='520.8' r='1.8' fill='#bfcbd6'/>
<circle cx='675.2' cy='519.9' r='1.8' fill='#bfcbd6'/>
<circle cx='678.7' cy='518.0' r='1.8' fill='#bfcbd6'/>
<circle cx='682.3' cy='520.8' r='1.8' fill='#bfcbd6'/>
<circle cx='686.2' cy='518.0' r='1.8' fill='#bfcbd6'/>
<circle cx='689.8' cy='520.8' r='1.8' fill='#bfcbd6'/>
<circle cx='693.3' cy='519.9' r='1.8' fill='#bfcbd6'/>
<circle cx='696.9' cy='519.9' r='1.8' fill='#bfcbd6'/>
<circle cx='700.4' cy='519.9' r='1.8' fill='#bfcbd6'/>
<circle cx='703.9' cy='520.8' r='1.8' fill='#bfcbd6'/>
<circle cx='707.9' cy='519.9' r='1.8' fill='#bfcbd6'/>
<circle cx='711.4' cy='519.9' r='1.8' fill='#bfcbd6'/>
<circle cx='715.0' cy='519.9' r='1.8' fill='#bfcbd6'/>
<circle cx='718.5' cy='519.9' r='1.8' fill='#bfcbd6'/>
<circle cx='722.1' cy='519.9' r='1.8' fill='#bfcbd6'/>
<circle cx='725.6' cy='519.9' r='1.8' fill='#bfcbd6'/>
<circle cx='729.6' cy='519.9' r='1.8' fill='#bfcbd6'/>
<circle cx='733.1' cy='519.9' r='1.8' fill='#bfcbd6'/>
<circle cx='736.6' cy='519.9' r='1.8' fill='#bfcbd6'/>
<circle cx='740.2' cy='519.9' r='1.8' fill='#bfcbd6'/>
<circle cx='743.7' cy='519.9' r='1.8' fill='#bfcbd6'/>
<circle cx='747.3' cy='518.0' r='1.8' fill='#bfcbd6'/>
<circle cx='751.2' cy='519.0' r='1.8' fill='#bfcbd6'/>
<circle cx='754.8' cy='519.9' r='1.8' fill='#bfcbd6'/>
<circle cx='758.3' cy='519.9' r='1.8' fill='#bfcbd6'/>
<circle cx='761.9' cy='519.9' r='1.8' fill='#bfcbd6'/>
<circle cx='765.4' cy='519.9' r='1.8' fill='#bfcbd6'/>
<circle cx='769.3' cy='519.9' r='1.8' fill='#bfcbd6'/>
<circle cx='772.9' cy='518.0' r='1.8' fill='#bfcbd6'/>
<circle cx='776.4' cy='521.8' r='1.8' fill='#bfcbd6'/>
<circle cx='780.0' cy='519.0' r='1.8' fill='#bfcbd6'/>
<circle cx='783.5' cy='519.0' r='1.8' fill='#bfcbd6'/>
<circle cx='787.5' cy='519.9' r='1.8' fill='#bfcbd6'/>
<circle cx='791.0' cy='519.9' r='1.8' fill='#bfcbd6'/>
<circle cx='794.6' cy='519.9' r='1.8' fill='#bfcbd6'/>
<circle cx='798.1' cy='519.9' r='1.8' fill='#bfcbd6'/>
<circle cx='801.7' cy='520.8' r='1.8' fill='#bfcbd6'/>
<circle cx='805.2' cy='519.9' r='1.8' fill='#bfcbd6'/>
<circle cx='809.0' cy='519.9' r='1.8' fill='#bfcbd6'/>
<circle cx='812.5' cy='521.8' r='1.8' fill='#bfcbd6'/>
<circle cx='816.1' cy='519.0' r='1.8' fill='#bfcbd6'/>
<circle cx='820.0' cy='519.9' r='1.8' fill='#bfcbd6'/>
<circle cx='823.6' cy='519.0' r='1.8' fill='#bfcbd6'/>
<circle cx='827.1' cy='519.9' r='1.8' fill='#bfcbd6'/>
<circle cx='830.7' cy='519.0' r='1.8' fill='#bfcbd6'/>
<circle cx='834.2' cy='521.8' r='1.8' fill='#bfcbd6'/>
<circle cx='837.8' cy='518.0' r='1.8' fill='#bfcbd6'/>
<circle cx='841.7' cy='520.8' r='1.8' fill='#bfcbd6'/>
<circle cx='845.3' cy='519.9' r='1.8' fill='#bfcbd6'/>
<circle cx='848.8' cy='519.9' r='1.8' fill='#bfcbd6'/>
<circle cx='852.3' cy='519.9' r='1.8' fill='#bfcbd6'/>
<circle cx='855.9' cy='520.8' r='1.8' fill='#bfcbd6'/>
<circle cx='859.4' cy='519.0' r='1.8' fill='#bfcbd6'/>
<circle cx='863.4' cy='520.8' r='1.8' fill='#bfcbd6'/>
<circle cx='866.9' cy='519.9' r='1.8' fill='#bfcbd6'/>
<circle cx='870.5' cy='519.9' r='1.8' fill='#bfcbd6'/>
<circle cx='874.0' cy='520.8' r='1.8' fill='#bfcbd6'/>
<circle cx='877.6' cy='521.8' r='1.8' fill='#bfcbd6'/>
<circle cx='881.1' cy='518.0' r='1.8' fill='#bfcbd6'/>
<circle cx='884.7' cy='520.8' r='1.8' fill='#bfcbd6'/>
<circle cx='888.6' cy='520.8' r='1.8' fill='#bfcbd6'/>
<circle cx='892.1' cy='520.8' r='1.8' fill='#bfcbd6'/>
<circle cx='895.7' cy='519.9' r='1.8' fill='#bfcbd6'/>
<circle cx='899.2' cy='519.0' r='1.8' fill='#bfcbd6'/>
<circle cx='902.8' cy='519.9' r='1.8' fill='#bfcbd6'/>
<circle cx='906.3' cy='519.9' r='1.8' fill='#bfcbd6'/>
<circle cx='910.3' cy='519.9' r='1.8' fill='#bfcbd6'/>
<circle cx='913.8' cy='519.9' r='1.8' fill='#bfcbd6'/>
<circle cx='917.4' cy='519.9' r='1.8' fill='#bfcbd6'/>
<circle cx='920.9' cy='520.8' r='1.8' fill='#bfcbd6'/>
<circle cx='924.4' cy='521.8' r='1.8' fill='#bfcbd6'/>
<circle cx='928.0' cy='519.0' r='1.8' fill='#bfcbd6'/>
<circle cx='931.5' cy='521.8' r='1.8' fill='#bfcbd6'/>
<circle cx='935.5' cy='521.8' r='1.8' fill='#bfcbd6'/>
<circle cx='939.0' cy='521.8' r='1.8' fill='#bfcbd6'/>
<circle cx='942.6' cy='519.9' r='1.8' fill='#bfcbd6'/>
<circle cx='946.1' cy='519.9' r='1.8' fill='#bfcbd6'/>
<circle cx='949.7' cy='519.9' r='1.8' fill='#bfcbd6'/>
<circle cx='953.6' cy='519.9' r='1.8' fill='#bfcbd6'/>
<circle cx='957.2' cy='519.9' r='1.8' fill='#bfcbd6'/>
<circle cx='960.7' cy='520.8' r='1.8' fill='#bfcbd6'/>
<circle cx='964.2' cy='518.0' r='1.8' fill='#bfcbd6'/>
<circle cx='967.8' cy='518.0' r='1.8' fill='#bfcbd6'/>
<circle cx='971.3' cy='519.0' r='1.8' fill='#bfcbd6'/>
<circle cx='974.9' cy='520.8' r='1.8' fill='#bfcbd6'/>
<circle cx='978.8' cy='520.8' r='1.8' fill='#bfcbd6'/>
<circle cx='982.4' cy='519.9' r='1.8' fill='#bfcbd6'/>
<circle cx='985.9' cy='520.8' r='1.8' fill='#bfcbd6'/>
<circle cx='989.5' cy='518.0' r='1.8' fill='#bfcbd6'/>
<circle cx='993.0' cy='520.8' r='1.8' fill='#bfcbd6'/>
<circle cx='996.6' cy='520.8' r='1.8' fill='#bfcbd6'/>
<circle cx='1000.1' cy='519.0' r='1.8' fill='#bfcbd6'/>
<circle cx='1004.0' cy='519.9' r='1.8' fill='#bfcbd6'/>
<circle cx='1007.6' cy='520.8' r='1.8' fill='#bfcbd6'/>
<circle cx='1011.1' cy='519.9' r='1.8' fill='#bfcbd6'/>
<circle cx='1014.7' cy='520.8' r='1.8' fill='#bfcbd6'/>
<circle cx='1018.2' cy='521.8' r='1.8' fill='#bfcbd6'/>
<circle cx='1021.8' cy='519.9' r='1.8' fill='#bfcbd6'/>
<circle cx='1025.7' cy='519.0' r='1.8' fill='#bfcbd6'/>
<circle cx='1029.3' cy='521.8' r='1.8' fill='#bfcbd6'/>
<circle cx='1032.8' cy='520.8' r='1.8' fill='#bfcbd6'/>
<circle cx='1036.3' cy='519.9' r='1.8' fill='#bfcbd6'/>
<circle cx='1040.3' cy='519.9' r='1.8' fill='#bfcbd6'/>
<circle cx='1043.8' cy='519.9' r='1.8' fill='#bfcbd6'/>
<circle cx='1047.4' cy='518.0' r='1.8' fill='#bfcbd6'/>
<circle cx='1050.9' cy='520.8' r='1.8' fill='#bfcbd6'/>
<circle cx='1054.5' cy='519.9' r='1.8' fill='#bfcbd6'/>
<circle cx='1058.0' cy='520.8' r='1.8' fill='#bfcbd6'/>
<circle cx='1062.0' cy='521.8' r='1.8' fill='#bfcbd6'/>
<circle cx='1065.5' cy='520.8' r='1.8' fill='#bfcbd6'/>
<circle cx='1069.0' cy='519.9' r='1.8' fill='#bfcbd6'/>
<circle cx='1072.6' cy='519.0' r='1.8' fill='#bfcbd6'/>
<circle cx='1076.1' cy='519.9' r='1.8' fill='#bfcbd6'/>
<circle cx='1079.7' cy='519.9' r='1.8' fill='#bfcbd6'/>
<circle cx='1083.6' cy='521.8' r='1.8' fill='#bfcbd6'/>
<circle cx='1087.0' cy='520.8' r='1.8' fill='#bfcbd6'/>
<circle cx='1090.6' cy='519.0' r='1.8' fill='#bfcbd6'/>
<circle cx='1094.5' cy='521.8' r='1.8' fill='#bfcbd6'/>
<circle cx='1098.1' cy='519.0' r='1.8' fill='#bfcbd6'/>
<circle cx='1101.6' cy='518.0' r='1.8' fill='#bfcbd6'/>
<circle cx='1105.2' cy='520.8' r='1.8' fill='#bfcbd6'/>
<circle cx='1108.7' cy='519.9' r='1.8' fill='#bfcbd6'/>
<circle cx='1112.6' cy='519.9' r='1.8' fill='#bfcbd6'/>
<circle cx='1116.2' cy='519.9' r='1.8' fill='#bfcbd6'/>
<circle cx='1119.7' cy='519.9' r='1.8' fill='#bfcbd6'/>
<circle cx='1123.3' cy='519.0' r='1.8' fill='#bfcbd6'/>
<circle cx='1126.8' cy='519.9' r='1.8' fill='#bfcbd6'/>
<circle cx='1130.8' cy='519.0' r='1.8' fill='#bfcbd6'/>
<circle cx='1134.3' cy='519.9' r='1.8' fill='#bfcbd6'/>
<circle cx='1137.9' cy='518.0' r='1.8' fill='#bfcbd6'/>
<circle cx='1141.4' cy='519.9' r='1.8' fill='#bfcbd6'/>
<circle cx='1145.0' cy='519.0' r='1.8' fill='#bfcbd6'/>
<circle cx='1148.9' cy='519.0' r='1.8' fill='#bfcbd6'/>
<circle cx='1152.4' cy='518.0' r='1.8' fill='#bfcbd6'/>
<circle cx='1156.0' cy='519.0' r='1.8' fill='#bfcbd6'/>
<circle cx='1159.5' cy='518.0' r='1.8' fill='#bfcbd6'/>
<circle cx='1163.1' cy='519.0' r='1.8' fill='#bfcbd6'/>
<circle cx='1167.0' cy='519.0' r='1.8' fill='#bfcbd6'/>
<circle cx='1170.6' cy='519.0' r='1.8' fill='#bfcbd6'/>
<circle cx='1174.1' cy='519.9' r='1.8' fill='#bfcbd6'/>
<circle cx='1177.7' cy='519.0' r='1.8' fill='#bfcbd6'/>
<circle cx='1181.2' cy='519.9' r='1.8' fill='#bfcbd6'/>
<circle cx='1184.7' cy='519.9' r='1.8' fill='#bfcbd6'/>
<circle cx='1188.7' cy='520.8' r='1.8' fill='#bfcbd6'/>
<circle cx='1192.2' cy='519.9' r='1.8' fill='#bfcbd6'/>
<circle cx='1195.8' cy='519.0' r='1.8' fill='#bfcbd6'/>
<circle cx='1199.3' cy='520.8' r='1.8' fill='#bfcbd6'/>
<circle cx='1202.9' cy='519.0' r='1.8' fill='#bfcbd6'/>
<circle cx='1206.8' cy='519.9' r='1.8' fill='#bfcbd6'/>
<circle cx='1210.4' cy='519.0' r='1.8' fill='#bfcbd6'/>
<circle cx='1213.9' cy='519.0' r='1.8' fill='#bfcbd6'/>
<circle cx='1217.4' cy='520.8' r='1.8' fill='#bfcbd6'/>
<circle cx='1221.0' cy='519.9' r='1.8' fill='#bfcbd6'/>
<circle cx='1224.9' cy='519.0' r='1.8' fill='#bfcbd6'/>
<circle cx='1228.5' cy='519.9' r='1.8' fill='#bfcbd6'/>
<circle cx='1232.0' cy='519.9' r='1.8' fill='#bfcbd6'/>
<circle cx='1235.6' cy='520.8' r='1.8' fill='#bfcbd6'/>
<circle cx='1239.1' cy='519.0' r='1.8' fill='#bfcbd6'/>
<circle cx='1242.7' cy='519.0' r='1.8' fill='#bfcbd6'/>
<circle cx='1246.6' cy='520.8' r='1.8' fill='#bfcbd6'/>
<circle cx='1250.2' cy='518.0' r='1.8' fill='#bfcbd6'/>
<circle cx='1253.7' cy='519.0' r='1.8' fill='#bfcbd6'/>
<circle cx='1257.2' cy='519.0' r='1.8' fill='#bfcbd6'/>
<circle cx='1260.8' cy='519.0' r='1.8' fill='#bfcbd6'/>
<circle cx='1264.3' cy='519.0' r='1.8' fill='#bfcbd6'/>
<circle cx='1268.3' cy='520.8' r='1.8' fill='#bfcbd6'/>
<circle cx='1271.8' cy='519.0' r='1.8' fill='#bfcbd6'/>
<circle cx='1275.4' cy='519.0' r='1.8' fill='#bfcbd6'/>
<circle cx='1278.9' cy='519.0' r='1.8' fill='#bfcbd6'/>
<circle cx='1282.5' cy='521.8' r='1.8' fill='#bfcbd6'/>
<circle cx='1286.0' cy='520.8' r='1.8' fill='#bfcbd6'/>
<circle cx='1289.9' cy='518.0' r='1.8' fill='#bfcbd6'/>
<circle cx='1293.5' cy='521.8' r='1.8' fill='#bfcbd6'/>
<circle cx='1297.0' cy='519.9' r='1.8' fill='#bfcbd6'/>
<circle cx='1300.6' cy='519.0' r='1.8' fill='#bfcbd6'/>
<circle cx='1304.1' cy='521.8' r='1.8' fill='#bfcbd6'/>
<circle cx='1308.1' cy='520.8' r='1.8' fill='#bfcbd6'/>
<circle cx='1311.6' cy='519.9' r='1.8' fill='#bfcbd6'/>
<circle cx='1315.2' cy='519.9' r='1.8' fill='#bfcbd6'/>
<circle cx='1318.7' cy='519.0' r='1.8' fill='#bfcbd6'/>
<circle cx='1322.3' cy='519.9' r='1.8' fill='#bfcbd6'/>
<circle cx='1326.2' cy='519.9' r='1.8' fill='#bfcbd6'/>
<circle cx='1329.7' cy='519.9' r='1.8' fill='#bfcbd6'/>
<circle cx='1333.3' cy='520.8' r='1.8' fill='#bfcbd6'/>
<circle cx='1336.8' cy='520.8' r='1.8' fill='#bfcbd6'/>
<circle cx='1340.4' cy='518.0' r='1.8' fill='#bfcbd6'/>
<circle cx='1344.3' cy='519.9' r='1.8' fill='#bfcbd6'/>
<circle cx='1347.9' cy='520.8' r='1.8' fill='#bfcbd6'/>
<circle cx='1351.4' cy='520.8' r='1.8' fill='#bfcbd6'/>
<circle cx='1355.0' cy='519.9' r='1.8' fill='#bfcbd6'/>
<circle cx='1358.5' cy='518.0' r='1.8' fill='#bfcbd6'/>
<circle cx='1362.1' cy='521.8' r='1.8' fill='#bfcbd6'/>
<circle cx='1365.6' cy='519.9' r='1.8' fill='#bfcbd6'/>
<circle cx='1369.2' cy='521.8' r='1.8' fill='#bfcbd6'/>
<circle cx='1372.8' cy='519.9' r='1.8' fill='#bfcbd6'/>
<circle cx='1376.7' cy='519.0' r='1.8' fill='#bfcbd6'/>
<circle cx='1380.3' cy='521.8' r='1.8' fill='#bfcbd6'/>
<circle cx='1383.8' cy='520.8' r='1.8' fill='#bfcbd6'/>
<rect x='173.3' y='21.349999999999998' width='16.7' height='1.7' rx='0.8' fill='#45a0ee'/>
<rect x='173.3' y='26.049999999999997' width='16.7' height='1.7' rx='0.8' fill='#45a0ee'/>
<rect x='173.3' y='30.75' width='16.7' height='1.7' rx='0.8' fill='#45a0ee'/>
<path fill='#f4f4f4' fill-rule='evenodd' d='M77.8,14.6 H90.3 Q91.8,14.6 91.8,16.1 V35.2 Q91.8,36.7 90.3,36.7 H77.8 Q76.3,36.7 76.3,35.2 V16.1 Q76.3,14.6 77.8,14.6 Z M79.8,18 V33.3 H88.3 V18 Z'/>
<path fill='#f4f4f4' d='M97.8,14.6 H109.8 Q111.3,14.6 111.3,16.1 V20.4 H107.9 V18 H99.8 V23.9 H109.8 Q111.3,23.9 111.3,25.4 V35.2 Q111.3,36.7 109.8,36.7 H97.8 Q96.3,36.7 96.3,35.2 V30.7 H99.8 V33.3 H107.9 V27.2 H97.8 Q96.3,27.2 96.3,25.7 V16.1 Q96.3,14.6 97.8,14.6 Z'/>
<path fill='#f2f2f2' d='M25.2,9.5 L29.5,7.2 L31,8.5 L31,38.5 L29.5,40.5 L28,46.8 L26.5,41.5 L25.2,39.5 Z'/>
<path fill='#f2f2f2' d='M29.5,7.2 L41.8,8.2 L39.8,10.2 L31,10.2 Z'/>
<path fill='#f2f2f2' d='M33.8,11.2 L39.8,9.8 L39.8,36.8 L36.8,38.3 L33.8,36.6 Z'/>
<path fill='#f2f2f2' d='M19.2,28.8 Q22.5,23.4 31,24 L31,26.8 Q24.5,26.4 20.3,31.2 Z'/>
<path fill='#b9bdc2' d='M24,10 Q18.2,11.6 18.5,16.6 Q19.5,20 24,19.2 L23.6,18.2 Q20.6,18.6 20.2,16.2 Q20.3,12.6 24.4,11 Z'/>
<path fill='#f2f2f2' d='M43,14.5 L45.2,13.6 L47.6,15.6 L47.6,36.5 L45.2,38.5 L43,36.8 L44,35.5 L44,16 Z'/>
<path fill='#f2f2f2' d='M50.7,15.6 L53,13.6 L55.2,14.6 L55.2,36.8 L53,38.5 L50.7,36.5 Z'/>
<path fill='#f2f2f2' d='M42.2,25.6 L44.5,24 L56.5,24.4 L55,27.6 L43.8,27.1 Z'/>
<path fill='#f2f2f2' d='M59.6,17 L62.6,15.2 L64.3,16 L64.3,36.5 L62.6,38 L59.6,36.5 L60.2,35 L60.2,18 Z'/>
<path fill='#f2f2f2' d='M62.6,15.2 L73.5,15 L71.5,18 L65.2,25.6 L64.3,25.6 L64.3,23.4 L69.6,18 L64.3,18 Z'/>
<path fill='#f2f2f2' d='M64.3,36 L66.5,34.5 L73,27.3 L72.6,33.4 L68,38.7 L62.6,38 Z'/>
<g fill='none' stroke='#e8eaec' stroke-width='2' stroke-linecap='round'><path d='M1369.2,27 C1371.2,20.6 1381.2,20.6 1383.2,27 C1381.2,33.4 1371.2,33.4 1369.2,27 Z'/><path d='M1370.8,20.6 L1382.4,32.4'/></g>
<circle cx='1375.6' cy='27.2' r='1.9' fill='#e8eaec'/>
<g fill='none' stroke='#c4c7ca' stroke-width='1.8' stroke-linecap='round'><path d='M1398.3,23.2 Q1405.6,17.3 1413,23.2'/><path d='M1400.8,26.2 Q1405.6,22.4 1410.5,26.2'/><path d='M1403.2,29 Q1405.6,27.3 1408,29'/></g>
<circle cx='1405.6' cy='30.8' r='1' fill='#c4c7ca'/>
<g fill='none' stroke='#e8eaec' stroke-width='1.9' stroke-linecap='round' stroke-linejoin='round'><path d='M1437.5,22.2 A6,6 0 1 0 1439.6,27.3'/><path d='M1433.6,19 L1437.8,22.3 L1433.8,25.2'/></g>
<g fill='none' stroke='#3d8fdc' stroke-width='1.6' stroke-linejoin='round'><path d='M48,109.5 L52.8,105.2 L57.6,109.5'/><path d='M49.3,108.5 V114 H56.3 V108.5'/><path d='M51.6,114 V111 H54 V114'/></g>
<g fill='none' stroke='#e8eaec' stroke-width='1.5' stroke-linecap='round' stroke-linejoin='round'><circle cx='52.4' cy='137' r='1.6'/><path d='M52.4,138.6 V140.3 M48.7,142.2 V140.3 H56.1 V142.2'/><circle cx='48.6' cy='143.3' r='1.4'/><circle cx='52.4' cy='143.3' r='1.4'/><circle cx='56.2' cy='143.3' r='1.4'/></g>
<g fill='none' stroke='#e8eaec' stroke-width='1.5' stroke-linecap='round' stroke-linejoin='round'><path d='M50.5,168.2 H58 M50.5,171.4 H58 M50.5,174.6 H58'/></g>
<circle cx='47.6' cy='168.2' r='0.75' fill='#e8eaec'/>
<circle cx='47.6' cy='171.4' r='0.75' fill='#e8eaec'/>
<circle cx='47.6' cy='174.6' r='0.75' fill='#e8eaec'/>
<g fill='none' stroke='#e8eaec' stroke-width='1.3' stroke-linecap='round' stroke-linejoin='round'><path d='M47,203.5 L49.2,203.5 L51,198.5 L54,207 L55.7,203 L58,203'/></g>
<g fill='none' stroke='#e8eaec' stroke-width='1.5' stroke-linecap='round' stroke-linejoin='round'><rect x='47' y='238.8' width='11.2' height='9.4' rx='1'/><path d='M47,242 H58.2 M47,245.1 H58.2 M49.8,238.8 V248.2'/></g>
<g fill='none' stroke='#e8eaec' stroke-width='1.2' stroke-linecap='round'><path d='M47.2,272.8 Q52.6,268.3 58,272.8'/><path d='M49,275.2 Q52.6,272.2 56.2,275.2'/><path d='M50.8,277.4 Q52.6,276.2 54.4,277.4'/></g>
<circle cx='52.6' cy='279' r='0.7' fill='#e8eaec'/>
<g fill='none' stroke='#e8eaec' stroke-width='1.5' stroke-linecap='round' stroke-linejoin='round'><path d='M52.5,301.3 C56.5,301.3 58.2,303.8 58.2,306 C58.2,308 56.8,308.6 55.3,308.3 C54,308 53.4,309 53.8,310 C53.2,310.8 52.8,310.8 52.3,310.8 C49.2,310.8 47,308.5 47,306 C47,303.3 49.3,301.3 52.5,301.3 Z'/></g>
<circle cx='50' cy='304.8' r='0.8' fill='#e8eaec'/>
<circle cx='52.6' cy='303.6' r='0.8' fill='#e8eaec'/>
<circle cx='55.2' cy='304.6' r='0.8' fill='#e8eaec'/>
<polygon points='57.60,336.50 56.11,337.95 56.14,340.04 54.05,340.01 52.60,341.50 51.15,340.01 49.06,340.04 49.09,337.95 47.60,336.50 49.09,335.05 49.06,332.96 51.15,332.99 52.60,331.50 54.05,332.99 56.14,332.96 56.11,335.05' fill='none' stroke='#e8eaec' stroke-width='1.5' stroke-linejoin='round'/>
<circle cx='52.6' cy='336.5' r='1.6' fill='none' stroke='#e8eaec' stroke-width='1.1'/>
<g fill='none' stroke='#e8eaec' stroke-width='1.3' stroke-linecap='round' stroke-linejoin='round'><path d='M48.2,366.5 A4.8,4.8 0 0 1 57,365'/><path d='M57.2,362.6 V365.4 H54.4'/><path d='M57,369 A4.8,4.8 0 0 1 48.2,370.5'/><path d='M48,373 V370.2 H50.8'/></g>
<circle cx='52.3' cy='407.8' r='5.7' fill='#e8eaec'/>
<text x='52.3' y='410.6' font-family='Liberation Sans' font-weight='bold' font-size='8' text-anchor='middle' fill='#0b1017'>&#x0E3F;</text>
<path d='M283,238.3 L287.3,242.8 L291.6,238.3' fill='none' stroke='#d0d3d6' stroke-width='1.1' stroke-linecap='round' stroke-linejoin='round'/>
<path d='M1400.5,238.3 L1404.8,242.8 L1409.1,238.3' fill='none' stroke='#d0d3d6' stroke-width='1.1' stroke-linecap='round' stroke-linejoin='round'/>
<circle cx='1343.6' cy='123.7' r='4.3' fill='none' stroke='#e8eaec' stroke-width='1.3'/>
<path d='M1342.3,123.1 Q1342.3,121.7 1343.6,121.7 Q1344.9,121.7 1344.9,122.9 Q1344.9,123.7 1343.6,124.3 V125.1' fill='none' stroke='#e8eaec' stroke-width='0.9'/>
<circle cx='1343.6' cy='126.4' r='0.55' fill='#e8eaec'/>
</svg>
<div class='bar' style='left:192.6px;top:661.6px;width:371.2px'><div style='width:201.3px'></div></div><div class='bar' style='left:192.6px;top:692.6px;width:371.2px'><div style='width:344.1px'></div></div><div class='bar' style='left:192.6px;top:723.8px;width:371.2px'><div style='width:290.2px'></div></div><div class='bar' style='left:619.5px;top:661.6px;width:371.5px'><div style='width:217.2px'></div></div><div class='bar' style='left:619.5px;top:692.6px;width:371.5px'><div style='width:185.2px'></div></div><div class='bar' style='left:1046.7px;top:661.6px;width:371.5px'><div style='width:166.5px'></div></div><div class='bar' style='left:1046.7px;top:692.6px;width:371.5px'><div style='width:197.5px'></div></div>
<div class='a' style='left:530.4px;top:692.6px;width:1.5px;height:5px;background:#e6e8ea'></div>
<span class='t' style='left:40.6px;top:41.1px;font-size:10.5px;font-weight:bold;color:#c3c7cc;transform:scaleX(0.960);'>bitaxe Coin Miner</span>
<span class='t' style='left:64.8px;top:104.1px;font-size:12px;font-weight:bold;color:#3d8fdc;transform:scaleX(0.845);'>Dashboard</span>
<span class='t' style='left:64.8px;top:134.8px;font-size:12px;font-weight:bold;color:#eef0f2;transform:scaleX(0.864);'>Swarm</span>
<span class='t' style='left:64.8px;top:165.5px;font-size:12px;font-weight:bold;color:#eef0f2;transform:scaleX(0.802);'>Logs</span>
<span class='t' style='left:64.8px;top:196.8px;font-size:12px;font-weight:bold;color:#eef0f2;transform:scaleX(0.890);'>System</span>
<span class='t' style='left:64.8px;top:238.4px;font-size:12px;font-weight:bold;color:#eef0f2;transform:scaleX(0.823);'>Pool</span>
<span class='t' style='left:64.8px;top:268.6px;font-size:12px;font-weight:bold;color:#eef0f2;transform:scaleX(0.887);'>Network</span>
<span class='t' style='left:64.8px;top:299.8px;font-size:12px;font-weight:bold;color:#eef0f2;transform:scaleX(0.853);'>Theme</span>
<span class='t' style='left:64.8px;top:330.8px;font-size:12px;font-weight:bold;color:#eef0f2;transform:scaleX(0.866);'>Settings</span>
<span class='t' style='left:64.8px;top:361.4px;font-size:12px;font-weight:bold;color:#eef0f2;transform:scaleX(0.861);'>Update</span>
<span class='t' style='left:63.9px;top:403.5px;font-size:12px;font-weight:bold;color:#eef0f2;transform:scaleX(0.872);'>Whitepaper</span>
<span class='t' style='left:192.5px;top:84.6px;font-size:12.5px;font-weight:normal;color:#dfe2e5;transform:scaleX(1.005);-webkit-text-stroke:0.45px #dfe2e5;'>Hashrate</span>
<span class='t' style='left:192.5px;top:112.0px;font-size:18px;font-weight:normal;color:#eef0f2;transform:scaleX(0.857);-webkit-text-stroke:0.45px #eef0f2;'>1.24 Th/s</span>
<span class='t' style='left:385.5px;top:110.7px;font-size:9px;font-weight:normal;color:#9da3a9;transform:scaleX(0.900);'>Error</span>
<span class='t' style='left:381.6px;top:121.1px;font-size:8.6px;font-weight:bold;color:#eef0f2;transform:scaleX(1.042);'>0.00%</span>
<span class='t' style='left:420.0px;top:110.7px;font-size:9px;font-weight:normal;color:#9da3a9;transform:scaleX(0.906);'>Expected</span>
<span class='t' style='left:418.8px;top:121.1px;font-size:8.6px;font-weight:bold;color:#eef0f2;transform:scaleX(0.895);'>1,275 Th/s</span>
<span class='t' style='left:231.5px;top:145.8px;font-size:10.5px;font-weight:normal;color:#c8cbcf;'>1m</span>
<span class='t' style='left:217.6px;top:159.1px;font-size:11px;font-weight:normal;color:#5aae5c;transform:scaleX(0.928);-webkit-text-stroke:0.35px #5aae5c;'>1.27 Th/s</span>
<span class='t' style='left:313.3px;top:145.8px;font-size:10.5px;font-weight:normal;color:#c8cbcf;'>10m</span>
<span class='t' style='left:302.3px;top:159.1px;font-size:11px;font-weight:normal;color:#5aae5c;transform:scaleX(0.928);-webkit-text-stroke:0.35px #5aae5c;'>1.27 Th/s</span>
<span class='t' style='left:403.2px;top:145.8px;font-size:10.5px;font-weight:normal;color:#c8cbcf;'>1h</span>
<span class='t' style='left:387.8px;top:159.1px;font-size:11px;font-weight:normal;color:#5aae5c;transform:scaleX(0.928);-webkit-text-stroke:0.35px #5aae5c;'>1.28 Th/s</span>
<span class='t' style='left:513.0px;top:84.6px;font-size:12.5px;font-weight:normal;color:#dfe2e5;transform:scaleX(1.014);-webkit-text-stroke:0.45px #dfe2e5;'>Efficiency</span>
<span class='t' style='left:513.0px;top:112.0px;font-size:18px;font-weight:normal;color:#eef0f2;transform:scaleX(0.829);-webkit-text-stroke:0.45px #eef0f2;'>17.53 J/Th</span>
<span class='t' style='left:741.0px;top:110.7px;font-size:9px;font-weight:normal;color:#9da3a9;transform:scaleX(0.906);'>Expected</span>
<span class='t' style='left:739.5px;top:121.1px;font-size:8.6px;font-weight:bold;color:#eef0f2;transform:scaleX(0.878);'>17.02 J/Th</span>
<span class='t' style='left:513.0px;top:144.7px;font-size:11px;font-weight:normal;color:#5aae5c;transform:scaleX(0.950);-webkit-text-stroke:0.25px #5aae5c;'>16.98 J/Th</span>
<span class='t' style='left:564.5px;top:144.7px;font-size:11px;font-weight:normal;color:#9da3a9;transform:scaleX(0.986);'>Average</span>
<span class='t' style='left:833.0px;top:84.6px;font-size:12.5px;font-weight:normal;color:#dfe2e5;transform:scaleX(0.985);-webkit-text-stroke:0.45px #dfe2e5;'>Shares</span>
<span class='t' style='left:833.0px;top:112.0px;font-size:18px;font-weight:normal;color:#eef0f2;transform:scaleX(0.914);-webkit-text-stroke:0.45px #eef0f2;'>203,720</span>
<span class='t' style='left:833.0px;top:144.7px;font-size:11px;font-weight:bold;color:#e0524c;transform:scaleX(0.980);'>40</span>
<span class='t' style='left:848.0px;top:144.7px;font-size:11px;font-weight:normal;color:#9da3a9;transform:scaleX(0.967);'>SStaleJob</span>
<span class='t' style='left:900.0px;top:144.7px;font-size:11px;font-weight:normal;color:#e4e6e8;transform:scaleX(1.020);-webkit-text-stroke:0.3px #e4e6e8;'>(0.02 %)</span>
<span class='t' style='left:833.0px;top:160.2px;font-size:11px;font-weight:bold;color:#e0524c;transform:scaleX(0.980);'>4</span>
<span class='t' style='left:841.5px;top:160.2px;font-size:11px;font-weight:normal;color:#9da3a9;transform:scaleX(0.979);'>SStaleJobNoSub</span>
<span class='t' style='left:926.5px;top:160.2px;font-size:11px;font-weight:normal;color:#e4e6e8;-webkit-text-stroke:0.3px #e4e6e8;'>(0.00 %)</span>
<span class='t' style='left:1153.7px;top:85.4px;font-size:12.5px;font-weight:normal;color:#dfe2e5;transform:scaleX(1.028);-webkit-text-stroke:0.45px #dfe2e5;'>Best Difficulty</span>
<span class='t' style='left:1153.7px;top:111.8px;font-size:18px;font-weight:normal;color:#eef0f2;transform:scaleX(0.838);-webkit-text-stroke:0.45px #eef0f2;'>3.23 G</span>
<span class='t' style='left:1203.0px;top:116.0px;font-size:13px;font-weight:normal;color:#9da3a9;'>all-time best</span>
<span class='t' style='left:1276.3px;top:116.0px;font-size:13px;font-weight:normal;color:#eef0f2;-webkit-text-stroke:0.4px #eef0f2;'>(0.0023%)</span>
<span class='t' style='left:1153.7px;top:145.3px;font-size:11px;font-weight:bold;color:#e8e8e8;transform:scaleX(1.006);'>65.82 M</span>
<span class='t' style='left:1196.5px;top:145.3px;font-size:11px;font-weight:normal;color:#9da3a9;transform:scaleX(1.028);'>since system boot</span>
<span class='t' style='left:201.0px;top:235.0px;font-size:10.5px;font-weight:normal;color:#e4e6e8;transform:scaleX(0.974);-webkit-text-stroke:0.4px #e4e6e8;'>Hashrate</span>
<span class='t' style='left:1318.5px;top:235.0px;font-size:10.5px;font-weight:normal;color:#e4e6e8;transform:scaleX(0.916);-webkit-text-stroke:0.4px #e4e6e8;'>ASIC Temp</span>
<span class='t' style='left:194.6px;top:265.1px;font-size:10px;font-weight:normal;color:#3d8fdc;transform:scaleX(0.935);-webkit-text-stroke:0.15px #3d8fdc;'>1,38 Th/s</span>
<span class='t' style='left:194.6px;top:293.1px;font-size:10px;font-weight:normal;color:#3d8fdc;transform:scaleX(0.935);-webkit-text-stroke:0.15px #3d8fdc;'>1,36 Th/s</span>
<span class='t' style='left:194.6px;top:321.1px;font-size:10px;font-weight:normal;color:#3d8fdc;transform:scaleX(0.935);-webkit-text-stroke:0.15px #3d8fdc;'>1,34 Th/s</span>
<span class='t' style='left:194.6px;top:349.1px;font-size:10px;font-weight:normal;color:#3d8fdc;transform:scaleX(0.935);-webkit-text-stroke:0.15px #3d8fdc;'>1,32 Th/s</span>
<span class='t' style='left:200.2px;top:377.1px;font-size:10px;font-weight:normal;color:#3d8fdc;transform:scaleX(0.923);-webkit-text-stroke:0.15px #3d8fdc;'>1,3 Th/s</span>
<span class='t' style='left:194.6px;top:405.1px;font-size:10px;font-weight:normal;color:#3d8fdc;transform:scaleX(0.935);-webkit-text-stroke:0.15px #3d8fdc;'>1,28 Th/s</span>
<span class='t' style='left:194.6px;top:433.1px;font-size:10px;font-weight:normal;color:#3d8fdc;transform:scaleX(0.935);-webkit-text-stroke:0.15px #3d8fdc;'>1,26 Th/s</span>
<span class='t' style='left:194.6px;top:461.1px;font-size:10px;font-weight:normal;color:#3d8fdc;transform:scaleX(0.935);-webkit-text-stroke:0.15px #3d8fdc;'>1,24 Th/s</span>
<span class='t' style='left:194.6px;top:489.1px;font-size:10px;font-weight:normal;color:#3d8fdc;transform:scaleX(0.935);-webkit-text-stroke:0.15px #3d8fdc;'>1,22 Th/s</span>
<span class='t' style='left:200.2px;top:517.1px;font-size:10px;font-weight:normal;color:#3d8fdc;transform:scaleX(0.923);-webkit-text-stroke:0.15px #3d8fdc;'>1,2 Th/s</span>
<span class='t' style='left:194.6px;top:545.1px;font-size:10px;font-weight:normal;color:#3d8fdc;transform:scaleX(0.935);-webkit-text-stroke:0.15px #3d8fdc;'>1,18 Th/s</span>
<span class='t' style='left:1392.3px;top:265.1px;font-size:10px;font-weight:normal;color:#a4a8ac;transform:scaleX(0.935);-webkit-text-stroke:0.3px #a4a8ac;'>75 °C</span>
<span class='t' style='left:1392.3px;top:305.1px;font-size:10px;font-weight:normal;color:#a4a8ac;transform:scaleX(0.935);-webkit-text-stroke:0.3px #a4a8ac;'>70 °C</span>
<span class='t' style='left:1392.3px;top:345.1px;font-size:10px;font-weight:normal;color:#a4a8ac;transform:scaleX(0.935);-webkit-text-stroke:0.3px #a4a8ac;'>65 °C</span>
<span class='t' style='left:1392.3px;top:385.1px;font-size:10px;font-weight:normal;color:#a4a8ac;transform:scaleX(0.935);-webkit-text-stroke:0.3px #a4a8ac;'>60 °C</span>
<span class='t' style='left:1392.3px;top:425.1px;font-size:10px;font-weight:normal;color:#a4a8ac;transform:scaleX(0.935);-webkit-text-stroke:0.3px #a4a8ac;'>55 °C</span>
<span class='t' style='left:1392.3px;top:465.1px;font-size:10px;font-weight:normal;color:#a4a8ac;transform:scaleX(0.935);-webkit-text-stroke:0.3px #a4a8ac;'>50 °C</span>
<span class='t' style='left:1392.3px;top:505.1px;font-size:10px;font-weight:normal;color:#a4a8ac;transform:scaleX(0.935);-webkit-text-stroke:0.3px #a4a8ac;'>45 °C</span>
<span class='t' style='left:1392.3px;top:545.1px;font-size:10px;font-weight:normal;color:#a4a8ac;transform:scaleX(0.935);-webkit-text-stroke:0.3px #a4a8ac;'>40 °C</span>
<span class='t' style='left:354.9px;top:616.8px;font-size:17px;font-weight:normal;color:#eef0f2;transform:scaleX(0.967);-webkit-text-stroke:0.65px #eef0f2;'>Power</span>
<span class='t' style='left:788.0px;top:616.8px;font-size:17px;font-weight:normal;color:#eef0f2;transform:scaleX(0.974);-webkit-text-stroke:0.65px #eef0f2;'>Heat</span>
<span class='t' style='left:1219.8px;top:616.8px;font-size:17px;font-weight:normal;color:#eef0f2;transform:scaleX(0.853);-webkit-text-stroke:0.65px #eef0f2;'>Fan</span>
<span class='t' style='left:192.6px;top:647.1px;font-size:11.5px;font-weight:bold;color:#eef0f2;transform:scaleX(0.889);'>Power</span>
<span class='t' style='left:533.3px;top:647.1px;font-size:11.5px;font-weight:bold;color:#eef0f2;transform:scaleX(0.837);'>21.7 W</span>
<span class='t' style='left:192.6px;top:679.0px;font-size:11.5px;font-weight:bold;color:#eef0f2;transform:scaleX(0.889);'>Input Voltage</span>
<span class='t' style='left:542.0px;top:679.0px;font-size:11.5px;font-weight:bold;color:#eef0f2;transform:scaleX(0.812);'>5.1 V</span>
<span class='t' style='left:192.6px;top:709.5px;font-size:11.5px;font-weight:bold;color:#eef0f2;transform:scaleX(0.860);'>ASIC Frequency</span>
<span class='t' style='left:520.2px;top:709.5px;font-size:11.5px;font-weight:bold;color:#eef0f2;transform:scaleX(0.947);'>625 MHz</span>
<span class='t' style='left:619.5px;top:647.1px;font-size:11.5px;font-weight:bold;color:#eef0f2;transform:scaleX(0.882);'>ASIC Temperature</span>
<span class='t' style='left:964.5px;top:647.1px;font-size:11.5px;font-weight:bold;color:#eef0f2;transform:scaleX(0.917);'>44 °C</span>
<span class='t' style='left:619.5px;top:679.0px;font-size:11.5px;font-weight:bold;color:#eef0f2;transform:scaleX(0.895);'>Voltage Regulator Temperature</span>
<span class='t' style='left:963.6px;top:679.0px;font-size:11.5px;font-weight:bold;color:#eef0f2;transform:scaleX(0.948);'>60 °C</span>
<span class='t' style='left:1046.7px;top:647.1px;font-size:11.5px;font-weight:bold;color:#eef0f2;transform:scaleX(0.870);'>Fan Speed</span>
<span class='t' style='left:1383.3px;top:647.1px;font-size:11.5px;font-weight:bold;color:#eef0f2;transform:scaleX(0.975);'>45.0 %</span>
<span class='t' style='left:1046.7px;top:679.0px;font-size:11.5px;font-weight:bold;color:#eef0f2;transform:scaleX(0.858);'>Fan RPM</span>
<span class='t' style='left:1370.6px;top:679.0px;font-size:11.5px;font-weight:bold;color:#eef0f2;transform:scaleX(0.876);'>3731 RPM</span>
<span class='t' style='left:524.5px;top:698.5px;font-size:8px;font-weight:normal;color:#eef0f2;transform:scaleX(0.957);-webkit-text-stroke:0.3px #eef0f2;'>5 V</span>
</body></html>
